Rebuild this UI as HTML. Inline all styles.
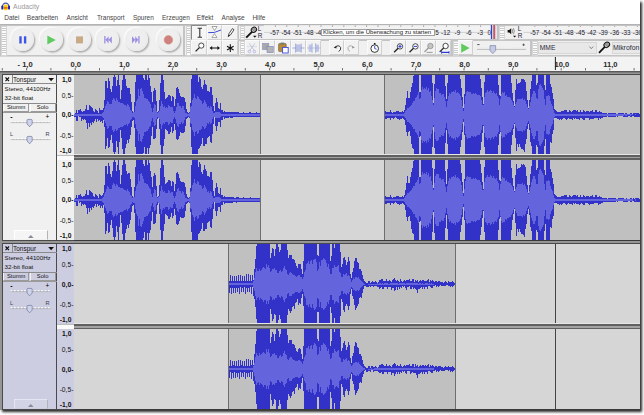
<!DOCTYPE html><html lang="de"><head><meta charset="utf-8"><title>Audacity</title><style>
html,body{margin:0;padding:0;background:#fff;}
body{width:644px;height:415px;overflow:hidden;position:relative;font-family:"Liberation Sans",sans-serif;color:#222;}
#win{position:absolute;left:0;top:0;width:640px;height:410px;background:#fff;box-shadow:1.5px 2px 2.5px rgba(0,0,0,.85);overflow:hidden;}
.abs{position:absolute;}
.t{position:absolute;white-space:nowrap;line-height:1;}
#title{left:13.1px;top:3.5px;font-size:6.8px;color:#9a9a9a;}
.menu{top:15.4px;font-size:6.5px;color:#444;}
#dock{left:0;top:24px;width:640px;height:32px;background:#f0f0f0;border-top:1px solid #b4b4b4;box-sizing:border-box;}
.tb{position:absolute;box-sizing:border-box;border:0.6px solid #c4c4c4;background:#f0f0f0;}
.grab{position:absolute;width:3.4px;background:repeating-linear-gradient(to bottom,#fcfcfc 0,#fcfcfc 1.2px,#cacaca 1.2px,#cacaca 2.2px);border:0.5px solid #d6d6d6;}
.rb{position:absolute;width:23px;height:23px;border-radius:50%;background:radial-gradient(circle at 45% 42%,#f1f1f1 0%,#ededed 60%,#e2e2e2 88%,#ececec 100%);box-shadow:1.2px 1.4px 1.8px rgba(0,0,0,.30),-1px -1px 1.5px rgba(255,255,255,.95);}
.sb{position:absolute;box-sizing:border-box;background:#f2f2f2;border:0.6px solid #d0d0d0;border-top-color:#fafafa;border-left-color:#fafafa;}
.sb.down{background:#f6f6f6;border-color:#8a8a8a #e8e8e8 #e8e8e8 #8a8a8a;}
#ruler{left:0;top:56px;width:640px;height:17px;background:linear-gradient(to bottom,#f3f3f3 0,#f3f3f3 13.8px,#5a5a5a 14.1px,#5a5a5a 15px,#7c7c7c 15.2px,#7c7c7c 16px);border-top:1px solid #d8d8d8;box-sizing:border-box;}
.rl{top:60.9px;font-size:7.6px;font-weight:bold;color:#2a2a2a;transform:translateX(-50%);}
#tracks{left:0;top:73px;width:640px;height:337px;background:#969696;}
.panel{position:absolute;left:2px;width:54px;box-sizing:border-box;border:1px solid #4a4a4a;border-right:none;}
.vr{position:absolute;left:56px;width:18.2px;box-sizing:border-box;border-left:1px solid #4a4a4a;}
.vl{position:absolute;left:56px;width:17.4px;text-align:right;font-size:6.7px;color:#111;line-height:1;white-space:nowrap;}
.pt{position:absolute;white-space:nowrap;line-height:1;font-size:6.15px;color:#111;}
.btn{position:absolute;box-sizing:border-box;border:0.6px solid #9a9a9a;border-top-color:rgba(255,255,255,.75);border-left-color:rgba(255,255,255,.75);color:#111;text-align:center;font-size:5.8px;line-height:7.4px;}
</style></head><body><div id="win"><svg class="abs" style="left:1px;top:1.9px" width="9.4" height="9" viewBox="0 0 10 9.6">
<rect x="2.9" y="2.6" width="4.2" height="6.3" rx="1.2" fill="#f8d010"/><rect x="2.9" y="5.6" width="4.2" height="1.4" fill="#ee4a10"/>
<path d="M1.5 5.2 A3.5 4 0 0 1 8.5 5.2" fill="none" stroke="#4452bc" stroke-width="1.25"/>
<rect x="0.3" y="3.7" width="2.2" height="4.4" rx="1" fill="#1c2aa8"/><rect x="7.5" y="3.7" width="2.2" height="4.4" rx="1" fill="#1c2aa8"/>
</svg><div class="t" id="title">Audacity</div><div class="t menu" style="left:4.2px">Datei</div><div class="t menu" style="left:26.8px">Bearbeiten</div><div class="t menu" style="left:66.6px">Ansicht</div><div class="t menu" style="left:96.9px">Transport</div><div class="t menu" style="left:132.9px">Spuren</div><div class="t menu" style="left:162.0px">Erzeugen</div><div class="t menu" style="left:196.8px">Effekt</div><div class="t menu" style="left:221.6px">Analyse</div><div class="t menu" style="left:252.4px">Hilfe</div><div class="abs" id="dock"></div><div class="tb" style="left:0;top:24.6px;width:184px;height:31px"></div><div class="grab" style="left:1.2px;top:26px;height:28px"></div><div class="rb" style="left:11.2px;top:28.4px"></div><div class="rb" style="left:39.5px;top:28.4px"></div><div class="rb" style="left:67.9px;top:28.4px"></div><div class="rb" style="left:96.3px;top:28.4px"></div><div class="rb" style="left:124.5px;top:28.4px"></div><div class="rb" style="left:156.9px;top:28.4px"></div><svg class="abs" style="left:0;top:24px" width="200" height="32" viewBox="0 0 200 32"><rect x="19.3" y="12.3" width="2.4" height="7.2" fill="#3f55e6"/><rect x="23.9" y="12.3" width="2.4" height="7.2" fill="#3f55e6"/><path d="M47.3 11.4 L55.8 15.9 L47.3 20.5Z" fill="#5fcb5f"/><rect x="76" y="12.4" width="7" height="7" fill="#c9aa86"/><path d="M104.2 12 h1.3 v7.6 h-1.3z M105.5 15.8 L108.6 12.2 V19.4Z M108.6 15.8 L111.8 12.2 V19.4Z" fill="#9a8fe2"/><path d="M139.6 12 h-1.3 v7.6 h1.3z M138.3 15.8 L135.2 12.2 V19.4Z M135.2 15.8 L132 12.2 V19.4Z" fill="#9a8fe2"/><circle cx="168.4" cy="15.9" r="4.3" fill="#d17f80" stroke="#c59a6a" stroke-width=".5"/></svg><div class="tb" style="left:184.3px;top:24.6px;width:54px;height:31px"></div><div class="grab" style="left:186px;top:26px;height:28px"></div><div class="sb down" style="left:191.0px;top:24.8px;width:15.6px;height:15.0px"></div><div class="sb" style="left:206.6px;top:24.8px;width:15.7px;height:15.0px"></div><div class="sb" style="left:222.3px;top:24.8px;width:15.7px;height:15.0px"></div><div class="sb" style="left:191.0px;top:39.8px;width:15.6px;height:15.2px"></div><div class="sb" style="left:206.6px;top:39.8px;width:15.7px;height:15.2px"></div><div class="sb" style="left:222.3px;top:39.8px;width:15.7px;height:15.2px"></div><svg class="abs" style="left:184px;top:24px" width="56" height="32" viewBox="0 0 56 32"><path d="M13.6 4.2 h4.4 M13.6 13.2 h4.4 M15.8 4.2 V13.2" stroke="#333" stroke-width="1.1" fill="none"/><path d="M28 2.5 h5 l-2.5 4z M28 13.6 h5 l-2.5 -4z" fill="#fff" stroke="#555" stroke-width=".5"/><path d="M24.2 8.6 Q30 9.6 37 6" stroke="#3a4ad8" stroke-width="1" fill="none"/><path d="M44.2 12.6 L45 9.6 L48.4 4.6 L50 5.7 L46.6 10.8Z" fill="#fff" stroke="#222" stroke-width=".8"/><path d="M44.2 12.6 L45 10.6 l1 .7z" fill="#222"/><circle cx="17.3" cy="21.6" r="2.6" fill="#fff" stroke="#222" stroke-width=".8"/><path d="M15.4 23.6 L11.6 27.4" stroke="#222" stroke-width="1.3"/><path d="M26.6 24 h8.4" stroke="#111" stroke-width="1"/><path d="M25.6 24 l2.6 -2 v4z M36 24 l-2.6 -2 v4z" fill="#111"/><path d="M46.3 20.2 V28 M43 22.2 L49.6 26 M49.6 22.2 L43 26" stroke="#111" stroke-width="1.1"/></svg><div class="tb" style="left:238.0px;top:24.6px;width:259.5px;height:15px"></div><div class="grab" style="left:239.7px;top:26px;height:12px"></div><svg class="abs" style="left:244px;top:24px" width="22" height="16" viewBox="0 0 22 16"><ellipse cx="9.9" cy="5.8" rx="2.8" ry="2.4" transform="rotate(-40 9.9 5.8)" fill="#bbb" stroke="#111" stroke-width="1"/><path d="M8 7.8 L2.2 13.6" stroke="#111" stroke-width="1.9"/><path d="M8.2 5 l2.6 2.4 M9.4 3.9 l2.4 2.2" stroke="#222" stroke-width=".5"/><path d="M9 11.8 h3.6 l-1.8 1.9z" fill="#111"/></svg><div class="t" style="left:257.8px;top:26.2px;font-size:6.4px;color:#223">L</div><div class="t" style="left:257.8px;top:32.8px;font-size:6.4px;color:#223">R</div><svg class="abs" style="left:0;top:24px" width="640" height="16" viewBox="0 0 640 16"><rect x="264" y="1.2" width="226" height="13.6" fill="#f2f2f2"/><path d="M264 8.4 H490" stroke="#c8c8c8" stroke-width=".8"/><path d="M275.4 1.6v1M286.8 1.6v1M298.2 1.6v1M309.6 1.6v1M321.0 1.6v1M332.4 1.6v1M343.8 1.6v1M355.2 1.6v1M366.6 1.6v1M378.0 1.6v1M389.4 1.6v1M400.8 1.6v1M412.2 1.6v1M423.6 1.6v1M435.0 1.6v1M446.4 1.6v1M457.8 1.6v1M469.2 1.6v1M480.6 1.6v1" stroke="#444" stroke-width=".7"/><rect x="523.5" y="1.2" width="116" height="13.6" fill="#f2f2f2"/><path d="M523.5 8.4 H640" stroke="#c8c8c8" stroke-width=".8"/><path d="M534.8 1.6v1M546.2 1.6v1M557.6 1.6v1M569.0 1.6v1M580.4 1.6v1M591.8 1.6v1M603.2 1.6v1M614.6 1.6v1M626.0 1.6v1M637.4 1.6v1" stroke="#444" stroke-width=".7"/><rect x="490.3" y="1" width="6" height="14" fill="#bcd4ee"/><rect x="491" y="1" width="1" height="14" fill="#2a40d0"/><rect x="493.3" y="1" width="1.7" height="14" fill="#e84a4a"/></svg><div class="t" style="left:275.4px;top:29.6px;font-size:6.3px;color:#223;transform:translateX(-58%)">-57</div><div class="t" style="left:286.8px;top:29.6px;font-size:6.3px;color:#223;transform:translateX(-58%)">-54</div><div class="t" style="left:298.2px;top:29.6px;font-size:6.3px;color:#223;transform:translateX(-58%)">-51</div><div class="t" style="left:309.6px;top:29.6px;font-size:6.3px;color:#223;transform:translateX(-58%)">-48</div><div class="t" style="left:321.0px;top:29.6px;font-size:6.3px;color:#223;transform:translateX(-58%)">-45</div><div class="t" style="left:332.4px;top:29.6px;font-size:6.3px;color:#223;transform:translateX(-58%)">-42</div><div class="t" style="left:343.8px;top:29.6px;font-size:6.3px;color:#223;transform:translateX(-58%)">-39</div><div class="t" style="left:355.2px;top:29.6px;font-size:6.3px;color:#223;transform:translateX(-58%)">-36</div><div class="t" style="left:366.6px;top:29.6px;font-size:6.3px;color:#223;transform:translateX(-58%)">-33</div><div class="t" style="left:378.0px;top:29.6px;font-size:6.3px;color:#223;transform:translateX(-58%)">-30</div><div class="t" style="left:389.4px;top:29.6px;font-size:6.3px;color:#223;transform:translateX(-58%)">-27</div><div class="t" style="left:400.8px;top:29.6px;font-size:6.3px;color:#223;transform:translateX(-58%)">-24</div><div class="t" style="left:412.2px;top:29.6px;font-size:6.3px;color:#223;transform:translateX(-58%)">-21</div><div class="t" style="left:423.6px;top:29.6px;font-size:6.3px;color:#223;transform:translateX(-58%)">-18</div><div class="t" style="left:435.0px;top:29.6px;font-size:6.3px;color:#223;transform:translateX(-58%)">-15</div><div class="t" style="left:446.4px;top:29.6px;font-size:6.3px;color:#223;transform:translateX(-58%)">-12</div><div class="t" style="left:457.8px;top:29.6px;font-size:6.3px;color:#223;transform:translateX(-58%)">-9</div><div class="t" style="left:469.2px;top:29.6px;font-size:6.3px;color:#223;transform:translateX(-58%)">-6</div><div class="t" style="left:480.6px;top:29.6px;font-size:6.3px;color:#223;transform:translateX(-58%)">-3</div><div class="t" style="left:489.3px;top:29.6px;font-size:6.3px;color:#223;transform:translateX(-50%)">0</div><div class="t" style="left:534.8px;top:29.6px;font-size:6.3px;color:#223;transform:translateX(-50%)">-57</div><div class="t" style="left:546.2px;top:29.6px;font-size:6.3px;color:#223;transform:translateX(-50%)">-54</div><div class="t" style="left:557.6px;top:29.6px;font-size:6.3px;color:#223;transform:translateX(-50%)">-51</div><div class="t" style="left:569.0px;top:29.6px;font-size:6.3px;color:#223;transform:translateX(-50%)">-48</div><div class="t" style="left:580.4px;top:29.6px;font-size:6.3px;color:#223;transform:translateX(-50%)">-45</div><div class="t" style="left:591.8px;top:29.6px;font-size:6.3px;color:#223;transform:translateX(-50%)">-42</div><div class="t" style="left:603.2px;top:29.6px;font-size:6.3px;color:#223;transform:translateX(-50%)">-39</div><div class="t" style="left:614.6px;top:29.6px;font-size:6.3px;color:#223;transform:translateX(-50%)">-36</div><div class="t" style="left:626.0px;top:29.6px;font-size:6.3px;color:#223;transform:translateX(-50%)">-33</div><div class="t" style="left:637.4px;top:29.6px;font-size:6.3px;color:#223;transform:translateX(-50%)">-30</div><div class="abs" style="left:321px;top:28.6px;width:113.5px;height:7.4px;background:#fff;border:0.6px solid #a0a0a0;box-sizing:border-box"></div><div class="t" style="left:323px;top:29.3px;font-size:6.05px;color:#222">Klicken, um die Überwachung zu starten</div><div class="tb" style="left:497.5px;top:24.6px;width:143px;height:15px;background:none"></div><div class="grab" style="left:499.3px;top:26px;height:12px"></div><svg class="abs" style="left:505px;top:24px" width="14" height="16" viewBox="0 0 14 16"><path d="M2.6 6 h1.6 l2 -1.8 v6 l-2 -1.8 h-1.6z" fill="#111"/><path d="M7.2 5.2 q1 2 0 4 M8.4 4.2 q1.8 3 0 6" stroke="#444" stroke-width=".55" fill="none"/><path d="M8 11.8 h3.2 l-1.6 1.8z" fill="#111"/></svg><div class="t" style="left:517.8px;top:26.2px;font-size:6.4px;color:#223">L</div><div class="t" style="left:517.8px;top:32.8px;font-size:6.4px;color:#223">R</div><div class="tb" style="left:238px;top:39.8px;width:213.5px;height:15.8px"></div><div class="grab" style="left:239.7px;top:41.2px;height:13px"></div><div class="sb" style="left:244.8px;top:40.3px;width:15.2px;height:14.8px"></div><div class="sb" style="left:260.0px;top:40.3px;width:15.2px;height:14.8px"></div><div class="sb" style="left:275.2px;top:40.3px;width:15.4px;height:14.8px"></div><div class="sb" style="left:290.6px;top:40.3px;width:15.4px;height:14.8px"></div><div class="sb" style="left:306.0px;top:40.3px;width:15.3px;height:14.8px"></div><div class="sb" style="left:329.3px;top:40.3px;width:15.0px;height:14.8px"></div><div class="sb" style="left:344.3px;top:40.3px;width:15.0px;height:14.8px"></div><div class="sb" style="left:367.0px;top:40.3px;width:15.4px;height:14.8px"></div><div class="sb" style="left:390.4px;top:40.3px;width:15.2px;height:14.8px"></div><div class="sb" style="left:405.6px;top:40.3px;width:15.0px;height:14.8px"></div><div class="sb" style="left:420.6px;top:40.3px;width:15.2px;height:14.8px"></div><div class="sb" style="left:435.8px;top:40.3px;width:15.2px;height:14.8px"></div><svg class="abs" style="left:238px;top:40px" width="214" height="16" viewBox="0 0 214 16"><path d="M11.4 3.4 L16.4 10.6 M16.8 3.4 L11.8 10.6" stroke="#b6bad6" stroke-width=".8"/><path d="M9 6.6 h10" stroke="#c4c8dc" stroke-width=".5"/><circle cx="11.4" cy="11.4" r="1.3" fill="none" stroke="#a8a8dc" stroke-width=".7"/><circle cx="16.4" cy="11.6" r="1.3" fill="none" stroke="#a8a8dc" stroke-width=".7"/><rect x="24.6" y="3.4" width="6.2" height="6.2" fill="#a8a8a8" stroke="#8890b8" stroke-width=".6"/><rect x="29" y="6.4" width="6.2" height="6.2" fill="#b4b4b4" stroke="#7880c0" stroke-width=".6"/><rect x="40.6" y="3.6" width="7.6" height="8" rx=".8" fill="#b58a3c" stroke="#6a5a3a" stroke-width=".6"/><rect x="42.6" y="2.6" width="3.6" height="1.8" fill="#777"/><rect x="44.6" y="7.4" width="5.6" height="5.6" fill="#fff" stroke="#3a48e0" stroke-width=".9"/><path d="M54.4 8 h12" stroke="#8ea0d8" stroke-width=".8"/><rect x="58" y="4.4" width="4.8" height="7.4" fill="#bcc2e6"/><path d="M57.6 3.6v9M63.2 3.6v9" stroke="#8490d0" stroke-width=".7"/><rect x="70.6" y="4.6" width="3" height="7.2" fill="#c0c6e6"/><rect x="78" y="4.6" width="3" height="7.2" fill="#c0c6e6"/><path d="M74 3.4v9.4M77.6 3.4v9.4" stroke="#8898d0" stroke-width=".7"/><path d="M69 8 h14" stroke="#9aa8dc" stroke-width=".6"/><path d="M97.4 7.2 Q100.6 4.2 102.6 7.4 Q103.4 10.2 100.6 11.4" fill="none" stroke="#222" stroke-width=".9"/><path d="M95.6 7.4 l3 -1.6 l-.2 2.8z" fill="#222"/><path d="M115.2 7.2 Q112 4.2 110 7.4 Q109.2 10.2 112 11.4" fill="none" stroke="#9a9a9a" stroke-width=".8"/><path d="M117 7.4 l-3 -1.6 l.2 2.8z" fill="#9a9a9a"/><circle cx="136.7" cy="8.6" r="3.8" fill="#fff" stroke="#222" stroke-width=".9"/><rect x="135.9" y="3" width="1.6" height="1.6" fill="#222"/><path d="M136.7 8.6 V6 M136.7 8.6 L138.6 9.2" stroke="#3040d0" stroke-width=".9"/><circle cx="162.0" cy="6.4" r="2.7" fill="#fff" stroke="#222" stroke-width=".8"/><path d="M160.1 8.3 l-4 4" stroke="#222" stroke-width="1.3"/><path d="M160.4 6.4h3.2M162 4.8v3.2" stroke="#2838d8" stroke-width="1"/><circle cx="177.4" cy="6.4" r="2.7" fill="#fff" stroke="#222" stroke-width=".8"/><path d="M175.5 8.3 l-4 4" stroke="#222" stroke-width="1.3"/><path d="M175.8 6.4h3.2" stroke="#2838d8" stroke-width="1"/><circle cx="192.4" cy="6.0" r="2.7" fill="#c4c4c4" stroke="#909090" stroke-width=".8"/><path d="M190.5 7.9 l-4 4" stroke="#909090" stroke-width="1.3"/><path d="M188.6 12.4h6" stroke="#909090" stroke-width=".9"/><circle cx="207.6" cy="6.0" r="2.7" fill="#fff" stroke="#222" stroke-width=".8"/><path d="M205.7 7.9 l-4 4" stroke="#222" stroke-width="1.3"/><path d="M203.6 12.4h7.4" stroke="#2838d8" stroke-width="1.2"/><path d="M203.6 11v2.8M211 11v2.8" stroke="#2838d8" stroke-width=".8"/></svg><div class="tb" style="left:451.5px;top:39.8px;width:79px;height:15.8px"></div><div class="grab" style="left:453.2px;top:41.2px;height:13px"></div><div class="sb" style="left:457.8px;top:40.3px;width:15px;height:14.8px"></div><svg class="abs" style="left:452px;top:40px" width="80" height="16" viewBox="0 0 80 16"><path d="M9.2 3.4 L17.6 8 L9.2 12.8Z" fill="#5fcb5f"/><path d="M25 9.4 H74" stroke="#b0b0b0" stroke-width=".8"/><path d="M25 9.4 H74" stroke="#e8e8e8" stroke-width="1.6" stroke-dasharray="1.6 1.6" transform="translate(0,-1.2)"/><path d="M25.2 4.6h2.4" stroke="#333" stroke-width=".8"/><path d="M70.4 4.8h2.4M71.6 3.6v2.4" stroke="#333" stroke-width=".7"/><path d="M38 5.6 h5.6 v5 l-2.8 3 l-2.8 -3z" fill="#c6cce4" stroke="#7a82a8" stroke-width=".7"/></svg><div class="tb" style="left:530.5px;top:39.8px;width:111px;height:15.8px"></div><div class="grab" style="left:532.2px;top:41.2px;height:13px"></div><div class="abs" style="left:537.6px;top:41.6px;width:59.6px;height:12.6px;background:#e8e8e8;border:0.6px solid #d6d6d6;box-sizing:border-box"></div><div class="t" style="left:539.8px;top:45.2px;font-size:6.7px;color:#2a2a3a">MME</div><svg class="abs" style="left:586px;top:40px" width="54" height="16" viewBox="0 0 54 16"><path d="M3.4 6.6 l1.9 2 l1.9 -2" fill="none" stroke="#555" stroke-width=".7"/><ellipse cx="20.8" cy="4.8" rx="3" ry="2.5" transform="rotate(-40 20.8 4.8)" fill="#bbb" stroke="#111" stroke-width="1"/><path d="M18.8 6.8 L13 12.8" stroke="#111" stroke-width="1.8"/><path d="M19.2 4 l2.6 2.4 M20.4 3 l2.4 2.2" stroke="#222" stroke-width=".5"/></svg><div class="abs" style="left:611.6px;top:41.6px;width:30px;height:12.6px;background:#e8e8e8;border:0.6px solid #d6d6d6;box-sizing:border-box"></div><div class="t" style="left:612.9px;top:45.2px;font-size:6.9px;color:#2a2a3a">Mikrofon</div><div class="abs" id="ruler"></div><svg class="abs" style="left:0;top:56px" width="640" height="15" viewBox="0 0 640 15"><path d="M2.3 12.2v2.2M26.6 12.2v2.2M50.9 12.2v2.2M75.2 12.2v2.2M99.5 12.2v2.2M123.8 12.2v2.2M148.1 12.2v2.2M172.4 12.2v2.2M196.7 12.2v2.2M221.0 12.2v2.2M245.3 12.2v2.2M269.6 12.2v2.2M293.9 12.2v2.2M318.2 12.2v2.2M342.5 12.2v2.2M366.8 12.2v2.2M391.1 12.2v2.2M415.4 12.2v2.2M439.7 12.2v2.2M464.0 12.2v2.2M488.3 12.2v2.2M512.6 12.2v2.2M536.9 12.2v2.2M561.2 12.2v2.2M585.5 12.2v2.2M609.8 12.2v2.2M634.1 12.2v2.2" stroke="#555" stroke-width=".9"/><path d="M555.4 1 V14" stroke="#222" stroke-width="1"/></svg><div class="t rl" style="left:25.1px">- 1,0</div><div class="t rl" style="left:75.8px">0,0</div><div class="t rl" style="left:124.4px">1,0</div><div class="t rl" style="left:173.0px">2,0</div><div class="t rl" style="left:221.6px">3,0</div><div class="t rl" style="left:270.2px">4,0</div><div class="t rl" style="left:318.8px">5,0</div><div class="t rl" style="left:367.4px">6,0</div><div class="t rl" style="left:416.0px">7,0</div><div class="t rl" style="left:464.6px">8,0</div><div class="t rl" style="left:513.2px">9,0</div><div class="t rl" style="left:561.8px">10,0</div><div class="t rl" style="left:610.4px">11,0</div><div class="abs" id="tracks"></div><div class="panel" style="top:74.0px;height:167.0px;background:#f0f0f0"></div><div class="vr" style="top:74.0px;height:167.0px;background:#f0f0f0;border-top:1px solid #4a4a4a;border-bottom:1px solid #4a4a4a"></div><div class="abs" style="left:3px;top:83.0px;width:53.5px;height:0.7px;background:#8a8a8a"></div><div class="abs" style="left:11.6px;top:75.0px;width:0.7px;height:8px;background:#8a8a8a"></div><svg class="abs" style="left:3px;top:75.0px" width="54" height="9" viewBox="0 0 54 9"><path d="M2.5 2.5 l3.5 3.7 M6 2.5 l-3.5 3.7" stroke="#111" stroke-width="1.15"/><path d="M45.2 3 h5.8 l-2.9 3.2z" fill="#111"/></svg><div class="pt" style="left:13px;top:76.5px;font-size:6.5px">Tonspur</div><div class="pt" style="left:4.6px;top:86.0px">Stereo, 44100Hz</div><div class="pt" style="left:4.6px;top:95.0px">32-bit float</div><div class="btn" style="left:3.2px;top:103.2px;width:26px;height:8.4px;background:#f0f0f0">Stumm</div><div class="btn" style="left:29.6px;top:103.2px;width:26px;height:8.4px;background:#f0f0f0">Solo</div><div class="abs" style="left:3px;top:102.6px;width:53.5px;height:0.7px;background:#8a8a8a"></div><div class="abs" style="left:3px;top:112.0px;width:53.5px;height:0.7px;background:#9a9a9a"></div><svg class="abs" style="left:3px;top:114.2px" width="54" height="16" viewBox="0 0 54 16"><path d="M7.6 8.6 H47.4" stroke="#a8a8a8" stroke-width=".8"/><path d="M7.6 7.6 H47.4" stroke="#fafafa" stroke-width="1.2" stroke-dasharray="1.7 1.7"/><path d="M24 6.4 q0 -1 1 -1 h3.2 q1 0 1 1 v3.6 l-2.6 2.8 l-2.6 -2.8z" fill="#cfd4ea" stroke="#70789c" stroke-width=".7"/></svg><div class="pt" style="left:10.2px;top:113.2px;font-size:7px;font-weight:bold;color:#000">-</div><div class="pt" style="left:45.4px;top:113.5px;font-size:6.4px;color:#000">+</div><svg class="abs" style="left:3px;top:131.4px" width="54" height="16" viewBox="0 0 54 16"><path d="M7.6 8.6 H47.4" stroke="#a8a8a8" stroke-width=".8"/><path d="M7.6 7.6 H47.4" stroke="#fafafa" stroke-width="1.2" stroke-dasharray="1.7 1.7"/><path d="M24 6.4 q0 -1 1 -1 h3.2 q1 0 1 1 v3.6 l-2.6 2.8 l-2.6 -2.8z" fill="#cfd4ea" stroke="#70789c" stroke-width=".7"/></svg><div class="pt" style="left:10px;top:131.9px;font-size:5.6px;color:#445">L</div><div class="pt" style="left:45.6px;top:131.9px;font-size:5.6px;color:#445">R</div><div class="btn" style="left:13.5px;top:230.4px;width:34px;height:9.6px;background:#f5f5f5;border-color:#fff #b4b4b4 #f0f0f0 #fff"></div><svg class="abs" style="left:27px;top:234.0px" width="8" height="5" viewBox="0 0 8 5"><path d="M1 4 h5.6 l-2.8 -3z" fill="#8a8a9a"/></svg><div class="vl" style="top:76.6px;font-weight:bold;width:15.4px">1,0</div><div class="vl" style="top:93.0px">0,5-</div><div class="vl" style="top:112.4px;font-weight:bold">0,0-</div><div class="vl" style="top:132.8px">-0,5-</div><div class="vl" style="top:147.7px;font-weight:bold;width:15.4px">-1,0</div><div class="vl" style="top:161.7px;font-weight:bold;width:15.4px">1,0</div><div class="vl" style="top:178.0px">0,5-</div><div class="vl" style="top:197.4px;font-weight:bold">0,0-</div><div class="vl" style="top:217.8px">-0,5-</div><div class="vl" style="top:232.7px;font-weight:bold;width:15.4px">-1,0</div><div class="abs" style="left:57px;top:154.7px;width:17.2px;height:5.2px;background:#fbfbfb;border-top:0.6px solid #bdbdbd;box-sizing:border-box"></div><div class="panel" style="top:243.0px;height:167.0px;background:#cdcde2"></div><div class="vr" style="top:243.0px;height:167.0px;background:#cdcde2;border-top:1px solid #4a4a4a;border-bottom:1px solid #4a4a4a"></div><div class="abs" style="left:3px;top:252.0px;width:53.5px;height:0.7px;background:#8a8a8a"></div><div class="abs" style="left:11.6px;top:244.0px;width:0.7px;height:8px;background:#8a8a8a"></div><svg class="abs" style="left:3px;top:244.0px" width="54" height="9" viewBox="0 0 54 9"><path d="M2.5 2.5 l3.5 3.7 M6 2.5 l-3.5 3.7" stroke="#111" stroke-width="1.15"/><path d="M45.2 3 h5.8 l-2.9 3.2z" fill="#111"/></svg><div class="pt" style="left:13px;top:245.5px;font-size:6.5px">Tonspur</div><div class="pt" style="left:4.6px;top:255.0px">Stereo, 44100Hz</div><div class="pt" style="left:4.6px;top:264.0px">32-bit float</div><div class="btn" style="left:3.2px;top:272.2px;width:26px;height:8.4px;background:#cdcde2">Stumm</div><div class="btn" style="left:29.6px;top:272.2px;width:26px;height:8.4px;background:#cdcde2">Solo</div><div class="abs" style="left:3px;top:271.6px;width:53.5px;height:0.7px;background:#8a8a8a"></div><div class="abs" style="left:3px;top:281.0px;width:53.5px;height:0.7px;background:#9a9a9a"></div><svg class="abs" style="left:3px;top:283.2px" width="54" height="16" viewBox="0 0 54 16"><path d="M7.6 8.6 H47.4" stroke="#a8a8a8" stroke-width=".8"/><path d="M7.6 7.6 H47.4" stroke="#fafafa" stroke-width="1.2" stroke-dasharray="1.7 1.7"/><path d="M24 6.4 q0 -1 1 -1 h3.2 q1 0 1 1 v3.6 l-2.6 2.8 l-2.6 -2.8z" fill="#cfd4ea" stroke="#70789c" stroke-width=".7"/></svg><div class="pt" style="left:10.2px;top:282.2px;font-size:7px;font-weight:bold;color:#000">-</div><div class="pt" style="left:45.4px;top:282.5px;font-size:6.4px;color:#000">+</div><svg class="abs" style="left:3px;top:300.4px" width="54" height="16" viewBox="0 0 54 16"><path d="M7.6 8.6 H47.4" stroke="#a8a8a8" stroke-width=".8"/><path d="M7.6 7.6 H47.4" stroke="#fafafa" stroke-width="1.2" stroke-dasharray="1.7 1.7"/><path d="M24 6.4 q0 -1 1 -1 h3.2 q1 0 1 1 v3.6 l-2.6 2.8 l-2.6 -2.8z" fill="#cfd4ea" stroke="#70789c" stroke-width=".7"/></svg><div class="pt" style="left:10px;top:300.9px;font-size:5.6px;color:#445">L</div><div class="pt" style="left:45.6px;top:300.9px;font-size:5.6px;color:#445">R</div><div class="btn" style="left:13.5px;top:399.4px;width:34px;height:9.6px;background:#d3d3e6;border-color:#e6e6f2 #b4b4b4 #cdcde2 #e6e6f2"></div><svg class="abs" style="left:27px;top:403.0px" width="8" height="5" viewBox="0 0 8 5"><path d="M1 4 h5.6 l-2.8 -3z" fill="#8a8a9a"/></svg><div class="vl" style="top:245.9px;font-weight:bold;width:15.4px">1,0</div><div class="vl" style="top:262.2px">0,5-</div><div class="vl" style="top:281.6px;font-weight:bold">0,0-</div><div class="vl" style="top:301.9px">-0,5-</div><div class="vl" style="top:316.8px;font-weight:bold;width:15.4px">-1,0</div><div class="vl" style="top:330.6px;font-weight:bold;width:15.4px">1,0</div><div class="vl" style="top:347.0px">0,5-</div><div class="vl" style="top:366.5px;font-weight:bold">0,0-</div><div class="vl" style="top:386.9px">-0,5-</div><div class="vl" style="top:401.9px;font-weight:bold;width:15.4px">-1,0</div><div class="abs" style="left:57px;top:323.8px;width:17.2px;height:5.0px;background:#fbfbfb;border-top:0.6px solid #bdbdbd;box-sizing:border-box"></div><svg class="abs" style="left:0;top:71px" width="640" height="340" viewBox="0 71 640 340" shape-rendering="crispEdges"><rect x="74" y="74.8" width="566" height="80.2" fill="#d6d6d6"/><rect x="74.0" y="74.8" width="187.0" height="80.2" fill="#c0c0c0"/><rect x="384.5" y="74.8" width="255.5" height="80.2" fill="#c0c0c0"/><rect x="74" y="159.9" width="566" height="80.1" fill="#d6d6d6"/><rect x="74.0" y="159.9" width="187.0" height="80.1" fill="#c0c0c0"/><rect x="384.5" y="159.9" width="255.5" height="80.1" fill="#c0c0c0"/><rect x="74" y="244.1" width="566" height="80.0" fill="#d6d6d6"/><rect x="228.5" y="244.1" width="227.0" height="80.0" fill="#c0c0c0"/><rect x="74" y="328.8" width="566" height="80.4" fill="#d6d6d6"/><rect x="228.5" y="328.8" width="227.0" height="80.4" fill="#c0c0c0"/><path d="M74.5 113.9V117.1M75.5 113.1V117.3M76.5 109.8V120.7M77.5 113.0V121.1M78.5 110.4V116.3M79.5 110.2V117.4M80.5 109.1V116.6M81.5 110.5V121.3M82.5 111.7V119.4M83.5 111.1V120.2M84.5 110.6V119.2M85.5 108.5V119.8M86.5 104.8V122.5M87.5 109.8V128.8M88.5 109.8V122.7M89.5 104.7V127.4M90.5 105.7V122.8M91.5 107.3V125.0M92.5 108.2V122.2M93.5 110.7V123.3M94.5 111.6V120.8M95.5 108.6V119.3M96.5 109.7V121.8M97.5 111.1V119.2M98.5 112.6V121.4M99.5 108.4V120.0M100.5 110.1V122.4M101.5 110.4V121.0M102.5 109.5V123.1M103.5 107.9V120.1M104.5 100.1V127.4M105.5 80.9V148.7M106.5 81.4V146.3M107.5 88.4V138.4M108.5 78.2V147.9M109.5 80.5V146.9M110.5 89.0V140.1M111.5 92.3V134.8M112.5 86.1V143.4M113.5 76.8V152.3M114.5 74.7V155.1M115.5 76.6V151.6M116.5 85.7V141.3M117.5 79.5V147.0M118.5 74.7V155.1M119.5 85.3V142.4M120.5 99.1V129.8M121.5 90.3V137.8M122.5 79.7V149.0M123.5 74.7V155.1M124.5 74.7V155.1M125.5 78.9V148.3M126.5 86.2V143.5M127.5 88.4V139.5M128.5 87.6V142.6M129.5 88.3V139.0M130.5 93.7V134.8M131.5 102.1V126.8M132.5 110.5V120.6M133.5 111.7V120.1M134.5 102.2V128.0M135.5 81.6V146.9M136.5 74.7V155.1M137.5 74.7V155.1M138.5 74.7V155.1M139.5 74.7V155.1M140.5 74.7V155.1M141.5 74.7V155.1M142.5 74.7V155.1M143.5 78.4V152.8M144.5 80.4V147.4M145.5 74.7V155.1M146.5 74.7V155.1M147.5 79.5V147.9M148.5 74.7V155.1M149.5 78.1V148.4M150.5 85.6V145.0M151.5 92.1V136.3M152.5 102.4V127.0M153.5 91.2V138.6M154.5 88.0V139.1M155.5 90.4V137.9M156.5 100.9V129.0M157.5 112.3V119.4M158.5 111.4V118.1M159.5 100.0V128.8M160.5 83.3V144.8M161.5 74.7V155.1M162.5 74.7V155.1M163.5 80.0V145.9M164.5 92.0V138.8M165.5 99.2V129.1M166.5 98.2V130.2M167.5 97.0V131.1M168.5 94.5V134.0M169.5 94.6V133.6M170.5 95.5V131.5M171.5 101.3V127.4M172.5 96.2V132.5M173.5 97.2V130.8M174.5 105.8V124.1M175.5 98.6V129.7M176.5 87.8V139.1M177.5 86.6V140.1M178.5 88.6V138.7M179.5 93.2V136.3M180.5 95.5V132.3M181.5 96.8V133.0M182.5 96.9V132.8M183.5 96.5V133.0M184.5 97.5V131.9M185.5 102.2V126.4M186.5 109.2V118.9M187.5 112.4V117.9M188.5 113.2V116.6M189.5 112.2V117.7M190.5 102.7V126.7M191.5 79.4V147.1M192.5 74.7V155.1M193.5 74.7V155.1M194.5 74.7V155.1M195.5 74.7V155.1M196.5 74.7V155.1M197.5 74.7V155.1M198.5 81.9V148.5M199.5 76.8V148.2M200.5 78.7V146.2M201.5 86.7V143.8M202.5 89.0V138.4M203.5 85.0V145.5M204.5 79.7V145.5M205.5 84.2V144.3M206.5 85.4V144.4M207.5 91.0V138.0M208.5 90.8V136.7M209.5 92.0V135.6M210.5 87.3V141.7M211.5 86.8V143.3M212.5 94.5V133.9M213.5 105.7V124.2M214.5 111.2V117.2M215.5 103.1V125.7M216.5 97.6V130.8M217.5 102.2V126.4M218.5 108.2V121.5M219.5 109.3V121.7M220.5 102.8V126.6M221.5 110.3V120.4M222.5 110.3V119.5M223.5 112.0V117.4M224.5 111.4V118.8M225.5 111.7V118.2M226.5 112.2V117.7M227.5 112.2V117.7M228.5 112.0V117.8M229.5 112.1V117.4M230.5 112.3V117.7M231.5 112.4V117.9M232.5 112.3V117.6M233.5 112.3V117.1M234.5 112.4V117.3M235.5 112.4V117.4M236.5 112.4V117.4M237.5 112.3V117.3M238.5 112.2V117.3M239.5 112.7V117.0M240.5 113.0V117.2M241.5 113.0V117.1M242.5 112.8V117.1M243.5 112.3V117.1M244.5 112.5V117.1M245.5 112.6V117.4M246.5 112.9V117.0M247.5 112.8V116.9M248.5 112.5V117.3M249.5 112.4V117.3M250.5 112.3V117.4M251.5 112.7V117.0M252.5 113.0V117.1M253.5 112.6V117.1M254.5 112.8V117.2M255.5 112.6V117.4M256.5 112.4V117.1M257.5 112.6V117.1M258.5 112.5V117.2M259.5 112.5V117.2M260.5 112.7V117.3" stroke="#3232c8" stroke-width="1" fill="none"/><path d="M74.5 114.3V115.5M75.5 114.3V115.5M76.5 114.3V115.5M77.5 114.2V115.6M78.5 114.2V115.6M79.5 114.1V115.7M80.5 114.3V115.5M81.5 114.2V115.6M82.5 114.3V115.5M83.5 114.1V115.7M84.5 114.2V115.6M85.5 114.3V115.5M86.5 114.1V115.7M87.5 114.0V115.8M88.5 114.0V115.8M89.5 114.1V115.7M90.5 114.1V115.7M91.5 114.0V115.8M92.5 114.2V115.6M93.5 114.1V115.7M94.5 114.0V115.8M95.5 114.0V115.8M96.5 114.0V115.8M97.5 114.1V115.7M98.5 113.8V116.0M99.5 114.1V115.7M100.5 113.9V115.9M101.5 114.0V115.8M102.5 113.1V116.7M103.5 111.5V118.3M104.5 109.3V120.5M105.5 106.4V123.4M106.5 104.2V125.6M107.5 101.3V128.5M108.5 101.5V128.3M109.5 103.7V126.1M110.5 104.2V125.6M111.5 104.1V125.7M112.5 99.7V130.1M113.5 97.9V131.9M114.5 99.3V130.5M115.5 101.2V128.6M116.5 98.4V131.4M117.5 99.9V129.9M118.5 102.1V127.7M119.5 102.3V127.5M120.5 102.7V127.1M121.5 103.0V126.8M122.5 102.5V127.3M123.5 103.8V126.0M124.5 104.6V125.2M125.5 104.5V125.3M126.5 105.5V124.3M127.5 103.9V125.9M128.5 105.4V124.4M129.5 106.6V123.2M130.5 110.2V119.6M131.5 111.3V118.5M132.5 113.3V116.5M133.5 112.4V117.4M134.5 112.1V117.7M135.5 106.0V123.8M136.5 101.3V128.5M137.5 99.2V130.6M138.5 88.7V141.1M139.5 95.5V134.3M140.5 89.2V140.6M141.5 88.0V141.8M142.5 91.2V138.6M143.5 94.3V135.5M144.5 98.0V131.8M145.5 98.2V131.6M146.5 99.1V130.7M147.5 99.1V130.7M148.5 101.3V128.5M149.5 102.4V127.4M150.5 103.7V126.1M151.5 108.4V121.4M152.5 112.1V117.7M153.5 107.6V122.2M154.5 103.7V126.1M155.5 105.1V124.7M156.5 111.0V118.8M157.5 113.1V116.7M158.5 112.2V117.6M159.5 110.8V119.0M160.5 105.8V124.0M161.5 101.0V128.8M162.5 104.4V125.4M163.5 106.6V123.2M164.5 106.1V123.7M165.5 108.1V121.7M166.5 107.4V122.4M167.5 107.5V122.3M168.5 105.0V124.8M169.5 106.3V123.5M170.5 107.4V122.4M171.5 107.2V122.6M172.5 107.2V122.6M173.5 110.7V119.1M174.5 113.2V116.6M175.5 111.1V118.7M176.5 107.1V122.7M177.5 103.4V126.4M178.5 102.9V126.9M179.5 105.9V123.9M180.5 105.7V124.1M181.5 108.0V121.8M182.5 105.5V124.3M183.5 106.4V123.4M184.5 109.8V120.0M185.5 112.6V117.2M186.5 113.0V116.8M187.5 113.7V116.1M188.5 114.2V115.6M189.5 112.7V117.1M190.5 107.2V122.6M191.5 105.6V124.2M192.5 99.9V129.9M193.5 97.5V132.3M194.5 94.3V135.5M195.5 97.9V131.9M196.5 98.5V131.3M197.5 95.6V134.2M198.5 97.3V132.5M199.5 99.4V130.4M200.5 100.2V129.6M201.5 101.0V128.8M202.5 104.3V125.5M203.5 102.8V127.0M204.5 100.4V129.4M205.5 102.2V127.6M206.5 104.0V125.8M207.5 107.3V122.5M208.5 106.1V123.7M209.5 107.7V122.1M210.5 106.3V123.5M211.5 107.0V122.8M212.5 110.7V119.1M213.5 112.5V117.3M214.5 113.1V116.7M215.5 111.5V118.3M216.5 111.5V118.3M217.5 112.3V117.5M218.5 112.0V117.8M219.5 112.2V117.6M220.5 112.9V116.9M221.5 113.5V116.3M222.5 114.0V115.8M223.5 114.1V115.7M224.5 114.1V115.7M225.5 114.0V115.8M226.5 114.0V115.8M227.5 113.9V115.9M228.5 113.8V116.0M229.5 114.0V115.8M230.5 113.8V116.0M231.5 113.9V115.9M232.5 114.0V115.8M233.5 113.8V116.0M234.5 114.0V115.8M235.5 114.1V115.7M236.5 113.9V115.9M237.5 113.8V116.0M238.5 113.8V116.0M239.5 114.0V115.8M240.5 113.8V116.0M241.5 114.0V115.8M242.5 114.0V115.8M243.5 114.0V115.8M244.5 113.9V115.9M245.5 114.0V115.8M246.5 114.0V115.8M247.5 113.9V115.9M248.5 113.8V116.0M249.5 113.8V116.0M250.5 114.0V115.8M251.5 113.8V116.0M252.5 113.9V115.9M253.5 113.8V116.0M254.5 113.9V115.9M255.5 114.0V115.8M256.5 114.0V115.8M257.5 114.0V115.8M258.5 113.9V115.9M259.5 114.0V115.8M260.5 113.9V115.9" stroke="#6464dc" stroke-width="1" fill="none"/><path d="M385.5 110.7V119.1M386.5 112.4V118.9M387.5 111.6V117.6M388.5 111.6V118.2M389.5 111.5V118.3M390.5 110.2V119.5M391.5 111.7V117.8M392.5 112.6V118.0M393.5 111.8V119.0M394.5 111.5V117.7M395.5 112.2V117.3M396.5 111.0V118.2M397.5 110.8V118.8M398.5 110.6V118.9M399.5 111.6V119.6M400.5 112.0V119.1M401.5 111.5V118.5M402.5 110.7V118.3M403.5 111.7V119.2M404.5 110.0V120.1M405.5 104.5V124.6M406.5 98.0V131.8M407.5 91.2V136.0M408.5 98.1V132.4M409.5 97.7V131.4M410.5 92.0V136.0M411.5 86.5V144.0M412.5 82.9V148.1M413.5 76.2V148.8M414.5 74.7V155.1M415.5 74.7V155.1M416.5 74.7V155.1M417.5 74.7V155.1M418.5 74.7V155.1M419.5 92.3V137.1M420.5 92.1V136.0M421.5 74.7V155.1M422.5 74.7V155.1M423.5 74.7V155.1M424.5 74.7V155.1M425.5 74.7V155.1M426.5 74.7V155.1M427.5 74.7V155.1M428.5 74.7V155.1M429.5 74.7V155.1M430.5 74.7V155.1M431.5 74.7V155.1M432.5 83.2V147.3M433.5 102.5V127.4M434.5 83.7V148.3M435.5 74.7V155.1M436.5 74.7V155.1M437.5 74.7V155.1M438.5 74.7V155.1M439.5 74.7V155.1M440.5 74.7V155.1M441.5 74.7V155.1M442.5 74.7V155.1M443.5 74.7V155.1M444.5 74.7V155.1M445.5 85.7V143.1M446.5 99.2V129.6M447.5 83.4V143.7M448.5 74.7V155.1M449.5 74.7V155.1M450.5 74.7V155.1M451.5 74.7V155.1M452.5 74.7V155.1M453.5 74.7V155.1M454.5 74.7V155.1M455.5 74.7V155.1M456.5 74.7V155.1M457.5 74.7V155.1M458.5 74.7V155.1M459.5 74.7V155.1M460.5 78.8V147.1M461.5 87.6V140.3M462.5 97.0V131.8M463.5 108.3V121.7M464.5 93.5V134.6M465.5 74.7V155.1M466.5 74.7V155.1M467.5 74.7V155.1M468.5 74.7V155.1M469.5 74.7V155.1M470.5 74.7V155.1M471.5 74.7V155.1M472.5 74.7V155.1M473.5 74.7V155.1M474.5 74.7V155.1M475.5 74.7V155.1M476.5 74.7V155.1M477.5 74.7V155.1M478.5 74.7V155.1M479.5 74.7V155.1M480.5 78.8V150.2M481.5 88.0V141.6M482.5 96.9V132.9M483.5 103.5V125.8M484.5 82.3V146.6M485.5 74.7V155.1M486.5 74.7V155.1M487.5 74.7V155.1M488.5 74.7V155.1M489.5 74.7V155.1M490.5 74.7V155.1M491.5 74.7V155.1M492.5 74.7V155.1M493.5 74.7V155.1M494.5 74.7V155.1M495.5 74.7V155.1M496.5 74.7V155.1M497.5 74.7V155.1M498.5 85.1V145.4M499.5 95.2V134.2M500.5 95.8V132.3M501.5 74.7V155.1M502.5 74.7V155.1M503.5 74.7V155.1M504.5 74.7V155.1M505.5 74.7V155.1M506.5 74.7V155.1M507.5 74.7V155.1M508.5 74.7V155.1M509.5 74.7V155.1M510.5 74.7V155.1M511.5 82.7V144.5M512.5 93.2V134.6M513.5 101.1V129.0M514.5 105.6V124.4M515.5 90.1V138.2M516.5 78.9V151.1M517.5 83.9V144.3M518.5 83.3V146.6M519.5 82.9V144.4M520.5 81.6V146.8M521.5 78.7V148.9M522.5 79.4V148.9M523.5 79.0V149.5M524.5 80.0V151.6M525.5 81.6V144.3M526.5 91.2V138.6M527.5 100.1V129.2M528.5 108.0V124.0M529.5 99.7V129.9M530.5 88.8V141.9M531.5 81.1V146.1M532.5 74.7V155.1M533.5 74.7V155.1M534.5 74.7V155.1M535.5 74.7V155.1M536.5 85.2V144.7M537.5 82.5V146.6M538.5 74.7V155.1M539.5 74.7V155.1M540.5 74.7V155.1M541.5 74.7V155.1M542.5 74.7V155.1M543.5 74.7V155.1M544.5 84.5V145.5M545.5 90.3V139.3M546.5 74.7V155.1M547.5 74.7V155.1M548.5 74.7V155.1M549.5 74.7V155.1M550.5 83.5V142.1M551.5 87.0V142.8M552.5 92.9V133.7M553.5 98.6V130.4M554.5 108.6V118.2M555.5 110.3V118.2M556.5 110.7V118.1M557.5 111.8V119.1M558.5 111.5V119.0M559.5 111.6V120.0M560.5 112.1V118.8M561.5 110.6V119.5M562.5 110.5V118.5M563.5 111.0V117.7M564.5 110.4V118.1M565.5 110.3V118.6M566.5 110.3V119.7M567.5 111.8V118.5M568.5 111.5V117.7M569.5 109.9V118.5M570.5 111.3V118.7M571.5 111.5V119.1M572.5 110.9V119.7M573.5 110.3V118.3M574.5 110.4V119.1M575.5 110.3V117.8M576.5 111.3V118.8M577.5 110.4V119.0M578.5 111.7V118.6M579.5 111.6V119.8M580.5 110.4V118.4M581.5 111.5V117.8M582.5 111.9V118.6M583.5 110.2V119.7M584.5 110.8V119.7M585.5 112.0V118.1M586.5 110.7V118.4M587.5 110.5V118.1M588.5 110.8V118.4M589.5 111.5V119.5M590.5 111.1V119.1M591.5 110.6V119.2M592.5 110.2V119.2M593.5 111.6V118.9M594.5 111.5V118.4M595.5 110.2V118.3M596.5 110.3V117.9M597.5 112.0V117.6M598.5 111.5V119.5M599.5 110.6V118.4M600.5 111.9V119.2M601.5 112.1V118.3M602.5 112.5V118.3M603.5 113.1V116.8M604.5 113.1V116.5M605.5 113.3V116.5M606.5 113.2V116.6M607.5 113.5V116.4M608.5 113.1V117.0M609.5 113.0V117.1M610.5 112.8V116.8M611.5 112.6V116.6M612.5 113.0V116.6M613.5 113.0V116.8M614.5 112.6V117.2M615.5 113.1V116.6M616.5 113.5V116.3M617.5 113.5V117.1M618.5 112.7V116.3M619.5 112.9V116.2M620.5 113.3V116.4M621.5 113.0V116.3M622.5 113.0V116.2M623.5 113.4V116.6M624.5 113.5V116.6M625.5 113.4V117.0M626.5 113.2V116.8M627.5 113.5V116.6M628.5 113.5V116.3M629.5 113.6V116.3M630.5 113.1V116.9M631.5 113.0V116.6M632.5 113.5V116.2M633.5 113.1V116.3M634.5 113.4V116.5M635.5 113.3V116.8M636.5 113.2V116.5M637.5 113.1V116.9M638.5 113.1V116.7M639.5 113.7V116.5" stroke="#3232c8" stroke-width="1" fill="none"/><path d="M385.5 114.2V115.6M386.5 114.1V115.7M387.5 114.1V115.7M388.5 114.1V115.7M389.5 114.1V115.7M390.5 114.1V115.7M391.5 114.1V115.7M392.5 114.1V115.7M393.5 114.1V115.7M394.5 114.1V115.7M395.5 114.0V115.8M396.5 114.1V115.7M397.5 114.0V115.8M398.5 114.0V115.8M399.5 114.0V115.8M400.5 114.0V115.8M401.5 114.0V115.8M402.5 113.9V115.9M403.5 113.9V115.9M404.5 112.8V117.0M405.5 111.4V118.4M406.5 110.0V119.8M407.5 108.1V121.7M408.5 107.7V122.1M409.5 107.0V122.8M410.5 106.3V123.5M411.5 104.5V125.3M412.5 102.8V127.0M413.5 101.2V128.6M414.5 100.8V129.0M415.5 97.9V131.9M416.5 96.9V132.9M417.5 95.3V134.5M418.5 92.2V137.6M419.5 98.7V131.1M420.5 97.5V132.3M421.5 90.1V139.7M422.5 86.8V143.0M423.5 89.0V140.8M424.5 87.7V142.1M425.5 88.6V141.2M426.5 87.0V142.8M427.5 90.1V139.7M428.5 88.3V141.5M429.5 92.1V137.7M430.5 90.9V138.9M431.5 95.8V134.0M432.5 99.8V130.0M433.5 105.1V124.7M434.5 97.5V132.3M435.5 90.7V139.1M436.5 88.4V141.4M437.5 88.5V141.3M438.5 89.4V140.4M439.5 92.6V137.2M440.5 92.9V136.9M441.5 94.7V135.1M442.5 94.3V135.5M443.5 94.2V135.6M444.5 97.3V132.5M445.5 101.4V128.4M446.5 107.0V122.8M447.5 100.5V129.3M448.5 95.5V134.3M449.5 92.7V137.1M450.5 93.6V136.2M451.5 91.7V138.1M452.5 91.8V138.0M453.5 91.1V138.7M454.5 92.2V137.6M455.5 90.1V139.7M456.5 92.6V137.2M457.5 92.0V137.8M458.5 92.8V137.0M459.5 94.1V135.7M460.5 96.0V133.8M461.5 99.7V130.1M462.5 106.3V123.5M463.5 110.6V119.2M464.5 104.1V125.7M465.5 96.0V133.8M466.5 92.4V137.4M467.5 91.0V138.8M468.5 92.2V137.6M469.5 91.7V138.1M470.5 91.9V137.9M471.5 93.8V136.0M472.5 94.2V135.6M473.5 93.2V136.6M474.5 94.2V135.6M475.5 92.6V137.2M476.5 94.1V135.7M477.5 94.6V135.2M478.5 94.5V135.3M479.5 95.1V134.7M480.5 96.4V133.4M481.5 100.3V129.5M482.5 104.6V125.2M483.5 104.9V124.9M484.5 96.5V133.3M485.5 92.6V137.2M486.5 92.2V137.6M487.5 90.2V139.6M488.5 91.7V138.1M489.5 91.4V138.4M490.5 90.3V139.5M491.5 91.4V138.4M492.5 92.5V137.3M493.5 90.8V139.0M494.5 92.8V137.0M495.5 94.3V135.5M496.5 93.0V136.8M497.5 96.3V133.5M498.5 98.0V131.8M499.5 104.5V125.3M500.5 99.0V130.8M501.5 94.0V135.8M502.5 92.0V137.8M503.5 92.9V136.9M504.5 92.4V137.4M505.5 95.6V134.2M506.5 94.8V135.0M507.5 97.0V132.8M508.5 96.7V133.1M509.5 97.4V132.4M510.5 98.0V131.8M511.5 99.9V129.9M512.5 101.6V128.2M513.5 104.6V125.2M514.5 106.9V122.9M515.5 104.0V125.8M516.5 101.5V128.3M517.5 98.8V131.0M518.5 98.8V131.0M519.5 99.3V130.5M520.5 98.8V131.0M521.5 98.5V131.3M522.5 98.2V131.6M523.5 100.1V129.7M524.5 98.5V131.3M525.5 101.0V128.8M526.5 103.9V125.9M527.5 107.3V122.5M528.5 109.3V120.5M529.5 106.3V123.5M530.5 102.1V127.7M531.5 96.8V133.0M532.5 93.6V136.2M533.5 91.2V138.6M534.5 91.3V138.5M535.5 93.4V136.4M536.5 98.4V131.4M537.5 98.8V131.0M538.5 88.7V141.1M539.5 84.6V145.2M540.5 83.8V146.0M541.5 85.6V144.2M542.5 87.7V142.1M543.5 89.9V139.9M544.5 99.3V130.5M545.5 105.3V124.5M546.5 96.3V133.5M547.5 95.8V134.0M548.5 95.2V134.6M549.5 95.5V134.3M550.5 100.9V128.9M551.5 104.0V125.8M552.5 106.2V123.6M553.5 110.2V119.6M554.5 112.7V117.1M555.5 113.7V116.1M556.5 113.7V116.1M557.5 113.8V116.0M558.5 113.8V116.0M559.5 113.9V115.9M560.5 113.8V116.0M561.5 113.8V116.0M562.5 113.9V115.9M563.5 113.9V115.9M564.5 113.8V116.0M565.5 113.8V116.0M566.5 113.9V115.9M567.5 113.9V115.9M568.5 113.9V115.9M569.5 113.9V115.9M570.5 113.9V115.9M571.5 113.9V115.9M572.5 114.0V115.8M573.5 113.9V115.9M574.5 113.9V115.9M575.5 113.9V115.9M576.5 113.9V115.9M577.5 114.0V115.8M578.5 114.0V115.8M579.5 114.0V115.8M580.5 114.0V115.8M581.5 114.0V115.8M582.5 114.0V115.8M583.5 114.0V115.8M584.5 114.0V115.8M585.5 114.1V115.7M586.5 114.0V115.8M587.5 114.0V115.8M588.5 114.0V115.8M589.5 114.0V115.8M590.5 114.0V115.8M591.5 114.0V115.8M592.5 114.0V115.8M593.5 114.1V115.7M594.5 114.1V115.7M595.5 114.1V115.7M596.5 114.1V115.7M597.5 114.1V115.7M598.5 114.1V115.7M599.5 114.1V115.7M600.5 114.1V115.7M601.5 114.2V115.6M602.5 114.2V115.6M603.5 114.2V115.6M604.5 114.2V115.6M605.5 114.2V115.6M606.5 114.2V115.6M607.5 114.2V115.6M608.5 114.2V115.6M609.5 114.2V115.6M610.5 114.2V115.6M611.5 114.2V115.6M612.5 114.2V115.6M613.5 114.2V115.6M614.5 114.2V115.6M615.5 114.3V115.5M616.5 114.2V115.6M617.5 114.3V115.5M618.5 114.3V115.5M619.5 114.3V115.5M620.5 114.3V115.5M621.5 114.3V115.5M622.5 114.3V115.5M623.5 114.3V115.5M624.5 114.4V115.4M625.5 114.3V115.5M626.5 114.3V115.5M627.5 114.4V115.4M628.5 114.4V115.4M629.5 114.4V115.4M630.5 114.3V115.5M631.5 114.4V115.4M632.5 114.4V115.4M635.5 114.4V115.4" stroke="#6464dc" stroke-width="1" fill="none"/><path d="M260.9 74.8V155.0M384.6 74.8V155.0" stroke="#6e6e6e" stroke-width="1"/><path d="M74.5 198.9V202.1M75.5 198.2V202.3M76.5 194.8V205.8M77.5 198.1V206.2M78.5 195.4V201.4M79.5 195.3V202.5M80.5 194.1V201.7M81.5 195.6V206.3M82.5 196.7V204.4M83.5 196.2V205.3M84.5 195.6V204.2M85.5 193.6V204.9M86.5 189.9V207.5M87.5 194.8V213.8M88.5 194.9V207.7M89.5 189.8V212.4M90.5 190.7V207.9M91.5 192.4V210.0M92.5 193.3V207.3M93.5 195.8V208.3M94.5 196.7V205.8M95.5 193.7V204.3M96.5 194.8V206.8M97.5 196.2V204.2M98.5 197.7V206.4M99.5 193.5V205.0M100.5 195.2V207.5M101.5 195.5V206.1M102.5 194.6V208.2M103.5 193.0V205.2M104.5 185.2V212.5M105.5 166.0V233.8M106.5 166.4V231.3M107.5 173.5V223.4M108.5 163.3V232.9M109.5 165.6V231.9M110.5 174.1V225.1M111.5 177.4V219.8M112.5 171.2V228.4M113.5 161.9V237.3M114.5 159.8V240.1M115.5 161.7V236.6M116.5 170.8V226.3M117.5 164.6V232.0M118.5 159.8V240.1M119.5 170.4V227.4M120.5 184.1V214.8M121.5 175.3V222.8M122.5 164.8V234.0M123.5 159.8V240.1M124.5 159.8V240.1M125.5 164.0V233.3M126.5 171.3V228.5M127.5 173.5V224.5M128.5 172.6V227.6M129.5 173.4V224.0M130.5 178.8V219.8M131.5 187.1V211.8M132.5 195.5V205.6M133.5 196.7V205.2M134.5 187.2V213.0M135.5 166.7V231.9M136.5 159.8V240.1M137.5 159.8V240.1M138.5 159.8V240.1M139.5 159.8V240.1M140.5 159.8V240.1M141.5 159.8V240.1M142.5 159.8V240.1M143.5 163.5V237.8M144.5 165.5V232.4M145.5 159.8V240.1M146.5 159.8V240.1M147.5 164.6V232.9M148.5 159.8V240.1M149.5 163.2V233.4M150.5 170.7V230.0M151.5 177.2V221.3M152.5 187.4V212.1M153.5 176.3V223.7M154.5 173.1V224.1M155.5 175.4V223.0M156.5 186.0V214.0M157.5 197.4V204.5M158.5 196.4V203.1M159.5 185.1V213.9M160.5 168.4V229.8M161.5 159.8V240.1M162.5 159.8V240.1M163.5 165.1V230.9M164.5 177.1V223.8M165.5 184.3V214.1M166.5 183.3V215.2M167.5 182.1V216.1M168.5 179.6V219.1M169.5 179.7V218.6M170.5 180.5V216.5M171.5 186.3V212.5M172.5 181.3V217.6M173.5 182.2V215.8M174.5 190.8V209.2M175.5 183.7V214.7M176.5 172.9V224.1M177.5 171.7V225.1M178.5 173.7V223.7M179.5 178.2V221.3M180.5 180.6V217.3M181.5 181.9V218.0M182.5 182.0V217.8M183.5 181.5V218.0M184.5 182.6V216.9M185.5 187.3V211.4M186.5 194.3V203.9M187.5 197.4V203.0M188.5 198.2V201.7M189.5 197.2V202.7M190.5 187.8V211.8M191.5 164.5V232.1M192.5 159.8V240.1M193.5 159.8V240.1M194.5 159.8V240.1M195.5 159.8V240.1M196.5 159.8V240.1M197.5 159.8V240.1M198.5 167.0V233.5M199.5 161.9V233.2M200.5 163.8V231.2M201.5 171.8V228.8M202.5 174.0V223.4M203.5 170.1V230.5M204.5 164.8V230.5M205.5 169.3V229.3M206.5 170.5V229.4M207.5 176.1V223.1M208.5 175.9V221.7M209.5 177.1V220.6M210.5 172.4V226.7M211.5 171.8V228.3M212.5 179.6V219.0M213.5 190.8V209.2M214.5 196.3V202.3M215.5 188.2V210.7M216.5 182.7V215.8M217.5 187.3V211.4M218.5 193.2V206.5M219.5 194.3V206.7M220.5 187.9V211.7M221.5 195.3V205.4M222.5 195.4V204.6M223.5 197.0V202.4M224.5 196.4V203.8M225.5 196.7V203.3M226.5 197.3V202.7M227.5 197.2V202.7M228.5 197.1V202.9M229.5 197.2V202.5M230.5 197.4V202.8M231.5 197.4V202.9M232.5 197.4V202.7M233.5 197.3V202.2M234.5 197.5V202.3M235.5 197.5V202.4M236.5 197.4V202.5M237.5 197.4V202.4M238.5 197.2V202.3M239.5 197.7V202.0M240.5 198.0V202.3M241.5 198.0V202.1M242.5 197.9V202.1M243.5 197.4V202.1M244.5 197.5V202.1M245.5 197.6V202.4M246.5 198.0V202.1M247.5 197.8V201.9M248.5 197.5V202.4M249.5 197.5V202.4M250.5 197.3V202.4M251.5 197.8V202.0M252.5 198.0V202.2M253.5 197.6V202.2M254.5 197.9V202.2M255.5 197.6V202.4M256.5 197.5V202.1M257.5 197.6V202.2M258.5 197.6V202.3M259.5 197.5V202.2M260.5 197.8V202.3" stroke="#3232c8" stroke-width="1" fill="none"/><path d="M74.5 199.4V200.5M75.5 199.3V200.6M76.5 199.4V200.5M77.5 199.3V200.6M78.5 199.3V200.6M79.5 199.1V200.8M80.5 199.4V200.5M81.5 199.3V200.6M82.5 199.3V200.6M83.5 199.2V200.7M84.5 199.3V200.6M85.5 199.3V200.6M86.5 199.1V200.8M87.5 199.1V200.8M88.5 199.1V200.8M89.5 199.2V200.7M90.5 199.2V200.7M91.5 199.0V200.9M92.5 199.2V200.7M93.5 199.1V200.8M94.5 199.0V200.9M95.5 199.1V200.8M96.5 199.0V200.9M97.5 199.2V200.7M98.5 198.9V201.0M99.5 199.1V200.8M100.5 198.9V201.0M101.5 199.1V200.8M102.5 198.1V201.8M103.5 196.5V203.4M104.5 194.4V205.5M105.5 191.5V208.4M106.5 189.3V210.6M107.5 186.3V213.6M108.5 186.6V213.3M109.5 188.8V211.1M110.5 189.3V210.6M111.5 189.2V210.7M112.5 184.8V215.1M113.5 183.0V216.9M114.5 184.4V215.5M115.5 186.3V213.6M116.5 183.5V216.4M117.5 185.0V214.9M118.5 187.1V212.8M119.5 187.4V212.5M120.5 187.8V212.1M121.5 188.1V211.8M122.5 187.5V212.4M123.5 188.9V211.0M124.5 189.7V210.2M125.5 189.5V210.4M126.5 190.6V209.3M127.5 189.0V210.9M128.5 190.5V209.4M129.5 191.6V208.3M130.5 195.3V204.6M131.5 196.3V203.6M132.5 198.3V201.6M133.5 197.4V202.5M134.5 197.1V202.8M135.5 191.1V208.8M136.5 186.4V213.5M137.5 184.2V215.7M138.5 173.8V226.1M139.5 180.6V219.3M140.5 174.2V225.7M141.5 173.1V226.8M142.5 176.3V223.6M143.5 179.3V220.6M144.5 183.1V216.8M145.5 183.2V216.7M146.5 184.1V215.8M147.5 184.2V215.7M148.5 186.4V213.5M149.5 187.5V212.4M150.5 188.7V211.2M151.5 193.5V206.4M152.5 197.1V202.8M153.5 192.6V207.3M154.5 188.8V211.1M155.5 190.2V209.7M156.5 196.0V203.9M157.5 198.2V201.7M158.5 197.3V202.6M159.5 195.8V204.1M160.5 190.8V209.1M161.5 186.1V213.8M162.5 189.5V210.4M163.5 191.7V208.2M164.5 191.2V208.7M165.5 193.1V206.8M166.5 192.5V207.4M167.5 192.6V207.3M168.5 190.1V209.8M169.5 191.4V208.5M170.5 192.5V207.4M171.5 192.2V207.7M172.5 192.3V207.6M173.5 195.7V204.2M174.5 198.2V201.7M175.5 196.1V203.8M176.5 192.1V207.8M177.5 188.5V211.4M178.5 187.9V212.0M179.5 191.0V208.9M180.5 190.8V209.1M181.5 193.0V206.9M182.5 190.6V209.3M183.5 191.5V208.4M184.5 194.9V205.0M185.5 197.6V202.3M186.5 198.1V201.8M187.5 198.8V201.1M188.5 199.3V200.6M189.5 197.8V202.1M190.5 192.2V207.7M191.5 190.7V209.2M192.5 184.9V215.0M193.5 182.6V217.3M194.5 179.4V220.5M195.5 183.0V216.9M196.5 183.6V216.3M197.5 180.7V219.2M198.5 182.4V217.5M199.5 184.5V215.4M200.5 185.2V214.7M201.5 186.0V213.9M202.5 189.4V210.5M203.5 187.8V212.1M204.5 185.4V214.5M205.5 187.3V212.6M206.5 189.1V210.8M207.5 192.3V207.6M208.5 191.1V208.8M209.5 192.8V207.1M210.5 191.3V208.6M211.5 192.0V207.9M212.5 195.8V204.1M213.5 197.5V202.4M214.5 198.1V201.8M215.5 196.5V203.4M216.5 196.6V203.3M217.5 197.4V202.5M218.5 197.0V202.9M219.5 197.3V202.6M220.5 197.9V202.0M221.5 198.5V201.4M222.5 199.1V200.8M223.5 199.1V200.8M224.5 199.1V200.8M225.5 199.1V200.8M226.5 199.0V200.9M227.5 199.0V200.9M228.5 198.8V201.1M229.5 199.1V200.8M230.5 198.9V201.0M231.5 198.9V201.0M232.5 199.1V200.8M233.5 198.8V201.1M234.5 199.1V200.8M235.5 199.1V200.8M236.5 198.9V201.0M237.5 198.8V201.1M238.5 198.9V201.0M239.5 199.0V200.9M240.5 198.8V201.1M241.5 199.0V200.9M242.5 199.1V200.8M243.5 199.1V200.8M244.5 198.9V201.0M245.5 199.1V200.8M246.5 199.1V200.8M247.5 198.9V201.0M248.5 198.8V201.1M249.5 198.9V201.0M250.5 199.0V200.9M251.5 198.9V201.0M252.5 199.0V200.9M253.5 198.8V201.1M254.5 199.0V200.9M255.5 199.0V200.9M256.5 199.0V200.9M257.5 199.0V200.9M258.5 199.0V200.9M259.5 199.1V200.8M260.5 199.0V200.9" stroke="#6464dc" stroke-width="1" fill="none"/><path d="M385.5 195.8V204.1M386.5 197.4V203.9M387.5 196.6V202.6M388.5 196.6V203.2M389.5 196.5V203.3M390.5 195.3V204.5M391.5 196.7V202.8M392.5 197.6V203.1M393.5 196.8V204.1M394.5 196.5V202.8M395.5 197.2V202.3M396.5 196.1V203.3M397.5 195.9V203.8M398.5 195.6V204.0M399.5 196.6V204.6M400.5 197.0V204.1M401.5 196.5V203.5M402.5 195.7V203.3M403.5 196.8V204.2M404.5 195.1V205.1M405.5 189.6V209.7M406.5 183.1V216.8M407.5 176.2V221.1M408.5 183.2V217.4M409.5 182.7V216.4M410.5 177.0V221.0M411.5 171.6V229.0M412.5 168.0V233.1M413.5 161.3V233.8M414.5 159.8V240.1M415.5 159.8V240.1M416.5 159.8V240.1M417.5 159.8V240.1M418.5 159.8V240.1M419.5 177.4V222.2M420.5 177.2V221.0M421.5 159.8V240.1M422.5 159.8V240.1M423.5 159.8V240.1M424.5 159.8V240.1M425.5 159.8V240.1M426.5 159.8V240.1M427.5 159.8V240.1M428.5 159.8V240.1M429.5 159.8V240.1M430.5 159.8V240.1M431.5 159.8V240.1M432.5 168.3V232.4M433.5 187.6V212.4M434.5 168.8V233.3M435.5 159.8V240.1M436.5 159.8V240.1M437.5 159.8V240.1M438.5 159.8V240.1M439.5 159.8V240.1M440.5 159.8V240.1M441.5 159.8V240.1M442.5 159.8V240.1M443.5 159.8V240.1M444.5 159.8V240.1M445.5 170.8V228.1M446.5 184.3V214.6M447.5 168.5V228.7M448.5 159.8V240.1M449.5 159.8V240.1M450.5 159.8V240.1M451.5 159.8V240.1M452.5 159.8V240.1M453.5 159.8V240.1M454.5 159.8V240.1M455.5 159.8V240.1M456.5 159.8V240.1M457.5 159.8V240.1M458.5 159.8V240.1M459.5 159.8V240.1M460.5 163.9V232.1M461.5 172.7V225.3M462.5 182.1V216.8M463.5 193.3V206.8M464.5 178.5V219.6M465.5 159.8V240.1M466.5 159.8V240.1M467.5 159.8V240.1M468.5 159.8V240.1M469.5 159.8V240.1M470.5 159.8V240.1M471.5 159.8V240.1M472.5 159.8V240.1M473.5 159.8V240.1M474.5 159.8V240.1M475.5 159.8V240.1M476.5 159.8V240.1M477.5 159.8V240.1M478.5 159.8V240.1M479.5 159.8V240.1M480.5 163.9V235.2M481.5 173.1V226.6M482.5 182.0V217.9M483.5 188.6V210.9M484.5 167.4V231.6M485.5 159.8V240.1M486.5 159.8V240.1M487.5 159.8V240.1M488.5 159.8V240.1M489.5 159.8V240.1M490.5 159.8V240.1M491.5 159.8V240.1M492.5 159.8V240.1M493.5 159.8V240.1M494.5 159.8V240.1M495.5 159.8V240.1M496.5 159.8V240.1M497.5 159.8V240.1M498.5 170.2V230.4M499.5 180.3V219.2M500.5 180.9V217.3M501.5 159.8V240.1M502.5 159.8V240.1M503.5 159.8V240.1M504.5 159.8V240.1M505.5 159.8V240.1M506.5 159.8V240.1M507.5 159.8V240.1M508.5 159.8V240.1M509.5 159.8V240.1M510.5 159.8V240.1M511.5 167.8V229.5M512.5 178.3V219.7M513.5 186.1V214.0M514.5 190.6V209.4M515.5 175.2V223.2M516.5 164.0V236.2M517.5 169.0V229.3M518.5 168.3V231.6M519.5 168.0V229.4M520.5 166.7V231.8M521.5 163.8V233.9M522.5 164.5V233.9M523.5 164.1V234.5M524.5 165.1V236.6M525.5 166.7V229.3M526.5 176.3V223.7M527.5 185.1V214.2M528.5 193.1V209.0M529.5 184.7V214.9M530.5 173.9V227.0M531.5 166.2V231.1M532.5 159.8V240.1M533.5 159.8V240.1M534.5 159.8V240.1M535.5 159.8V240.1M536.5 170.3V229.7M537.5 167.6V231.6M538.5 159.8V240.1M539.5 159.8V240.1M540.5 159.8V240.1M541.5 159.8V240.1M542.5 159.8V240.1M543.5 159.8V240.1M544.5 169.6V230.5M545.5 175.4V224.3M546.5 159.8V240.1M547.5 159.8V240.1M548.5 159.8V240.1M549.5 159.8V240.1M550.5 168.6V227.1M551.5 172.1V227.9M552.5 178.0V218.8M553.5 183.7V215.5M554.5 193.6V203.3M555.5 195.3V203.2M556.5 195.8V203.2M557.5 196.8V204.2M558.5 196.6V204.1M559.5 196.7V205.0M560.5 197.2V203.9M561.5 195.6V204.5M562.5 195.6V203.5M563.5 196.0V202.8M564.5 195.4V203.1M565.5 195.4V203.6M566.5 195.4V204.7M567.5 196.8V203.6M568.5 196.5V202.7M569.5 195.0V203.5M570.5 196.3V203.7M571.5 196.5V204.2M572.5 196.0V204.8M573.5 195.3V203.4M574.5 195.4V204.2M575.5 195.3V202.9M576.5 196.4V203.9M577.5 195.4V204.1M578.5 196.7V203.7M579.5 196.6V204.8M580.5 195.4V203.5M581.5 196.6V202.8M582.5 196.9V203.6M583.5 195.3V204.7M584.5 195.8V204.7M585.5 197.1V203.1M586.5 195.8V203.4M587.5 195.5V203.1M588.5 195.9V203.5M589.5 196.5V204.5M590.5 196.2V204.1M591.5 195.7V204.2M592.5 195.2V204.2M593.5 196.7V203.9M594.5 196.5V203.4M595.5 195.2V203.3M596.5 195.4V203.0M597.5 197.1V202.6M598.5 196.6V204.6M599.5 195.7V203.5M600.5 196.9V204.2M601.5 197.2V203.3M602.5 197.5V203.3M603.5 198.1V201.8M604.5 198.1V201.6M605.5 198.3V201.6M606.5 198.2V201.7M607.5 198.5V201.5M608.5 198.2V202.1M609.5 198.1V202.1M610.5 197.9V201.9M611.5 197.6V201.7M612.5 198.0V201.6M613.5 198.0V201.8M614.5 197.7V202.2M615.5 198.2V201.7M616.5 198.6V201.4M617.5 198.5V202.1M618.5 197.8V201.3M619.5 197.9V201.3M620.5 198.3V201.4M621.5 198.0V201.3M622.5 198.1V201.3M623.5 198.4V201.7M624.5 198.5V201.7M625.5 198.5V202.0M626.5 198.2V201.8M627.5 198.6V201.6M628.5 198.6V201.3M629.5 198.6V201.4M630.5 198.2V201.9M631.5 198.1V201.6M632.5 198.6V201.3M633.5 198.2V201.4M634.5 198.5V201.5M635.5 198.4V201.8M636.5 198.3V201.6M637.5 198.1V202.0M638.5 198.2V201.7M639.5 198.7V201.6" stroke="#3232c8" stroke-width="1" fill="none"/><path d="M385.5 199.2V200.7M386.5 199.2V200.7M387.5 199.2V200.7M388.5 199.2V200.7M389.5 199.1V200.8M390.5 199.1V200.8M391.5 199.2V200.7M392.5 199.1V200.8M393.5 199.1V200.8M394.5 199.2V200.7M395.5 199.1V200.8M396.5 199.1V200.8M397.5 199.1V200.8M398.5 199.0V200.9M399.5 199.0V200.9M400.5 199.0V200.9M401.5 199.0V200.9M402.5 199.0V200.9M403.5 199.0V200.9M404.5 197.9V202.0M405.5 196.4V203.5M406.5 195.0V204.9M407.5 193.1V206.8M408.5 192.7V207.2M409.5 192.1V207.8M410.5 191.3V208.6M411.5 189.6V210.3M412.5 187.9V212.0M413.5 186.3V213.6M414.5 185.9V214.0M415.5 183.0V216.9M416.5 182.0V217.9M417.5 180.3V219.6M418.5 177.2V222.7M419.5 183.8V216.1M420.5 182.6V217.3M421.5 175.2V224.7M422.5 171.9V228.0M423.5 174.1V225.8M424.5 172.8V227.1M425.5 173.6V226.3M426.5 172.1V227.8M427.5 175.1V224.8M428.5 173.3V226.6M429.5 177.2V222.7M430.5 176.0V223.9M431.5 180.9V219.0M432.5 184.9V215.0M433.5 190.2V209.7M434.5 182.6V217.3M435.5 175.8V224.1M436.5 173.5V226.4M437.5 173.6V226.3M438.5 174.4V225.5M439.5 177.7V222.2M440.5 178.0V221.9M441.5 179.8V220.1M442.5 179.4V220.5M443.5 179.3V220.6M444.5 182.4V217.5M445.5 186.5V213.4M446.5 192.0V207.9M447.5 185.5V214.4M448.5 180.6V219.3M449.5 177.7V222.2M450.5 178.7V221.2M451.5 176.8V223.1M452.5 176.9V223.0M453.5 176.2V223.7M454.5 177.3V222.6M455.5 175.2V224.7M456.5 177.7V222.2M457.5 177.0V222.9M458.5 177.9V222.0M459.5 179.2V220.7M460.5 181.0V218.9M461.5 184.8V215.1M462.5 191.3V208.6M463.5 195.6V204.3M464.5 189.1V210.8M465.5 181.1V218.8M466.5 177.4V222.5M467.5 176.1V223.8M468.5 177.3V222.6M469.5 176.7V223.2M470.5 176.9V223.0M471.5 178.9V221.0M472.5 179.2V220.7M473.5 178.3V221.6M474.5 179.3V220.6M475.5 177.7V222.2M476.5 179.1V220.8M477.5 179.6V220.3M478.5 179.6V220.3M479.5 180.1V219.8M480.5 181.5V218.4M481.5 185.3V214.6M482.5 189.6V210.3M483.5 190.0V209.9M484.5 181.6V218.3M485.5 177.7V222.2M486.5 177.3V222.6M487.5 175.3V224.6M488.5 176.8V223.1M489.5 176.5V223.4M490.5 175.4V224.5M491.5 176.4V223.5M492.5 177.6V222.3M493.5 175.9V224.0M494.5 177.9V222.0M495.5 179.4V220.5M496.5 178.1V221.8M497.5 181.3V218.6M498.5 183.1V216.8M499.5 189.5V210.4M500.5 184.1V215.8M501.5 179.1V220.8M502.5 177.1V222.8M503.5 178.0V221.9M504.5 177.5V222.4M505.5 180.7V219.2M506.5 179.9V220.0M507.5 182.1V217.8M508.5 181.7V218.2M509.5 182.5V217.4M510.5 183.1V216.8M511.5 185.0V214.9M512.5 186.7V213.2M513.5 189.7V210.2M514.5 192.0V207.9M515.5 189.1V210.8M516.5 186.6V213.3M517.5 183.9V216.0M518.5 183.8V216.1M519.5 184.4V215.5M520.5 183.9V216.0M521.5 183.6V216.3M522.5 183.3V216.6M523.5 185.2V214.7M524.5 183.5V216.4M525.5 186.0V213.9M526.5 188.9V211.0M527.5 192.3V207.6M528.5 194.4V205.5M529.5 191.3V208.6M530.5 187.2V212.7M531.5 181.8V218.1M532.5 178.6V221.3M533.5 176.3V223.6M534.5 176.4V223.5M535.5 178.5V221.4M536.5 183.5V216.4M537.5 183.9V216.0M538.5 173.8V226.1M539.5 169.6V230.3M540.5 168.9V231.0M541.5 170.7V229.2M542.5 172.8V227.1M543.5 175.0V224.9M544.5 184.3V215.6M545.5 190.3V209.6M546.5 181.4V218.5M547.5 180.9V219.0M548.5 180.2V219.7M549.5 180.5V219.4M550.5 185.9V214.0M551.5 189.0V210.9M552.5 191.3V208.6M553.5 195.2V204.7M554.5 197.7V202.2M555.5 198.8V201.1M556.5 198.8V201.1M557.5 198.9V201.0M558.5 198.9V201.0M559.5 198.9V201.0M560.5 198.8V201.1M561.5 198.9V201.0M562.5 198.9V201.0M563.5 199.0V200.9M564.5 198.9V201.0M565.5 198.9V201.0M566.5 199.0V200.9M567.5 198.9V201.0M568.5 198.9V201.0M569.5 198.9V201.0M570.5 198.9V201.0M571.5 199.0V200.9M572.5 199.0V200.9M573.5 199.0V200.9M574.5 199.0V200.9M575.5 199.0V200.9M576.5 199.0V200.9M577.5 199.0V200.9M578.5 199.0V200.9M579.5 199.1V200.8M580.5 199.0V200.9M581.5 199.0V200.9M582.5 199.1V200.8M583.5 199.1V200.8M584.5 199.1V200.8M585.5 199.1V200.8M586.5 199.1V200.8M587.5 199.1V200.8M588.5 199.1V200.8M589.5 199.1V200.8M590.5 199.1V200.8M591.5 199.1V200.8M592.5 199.1V200.8M593.5 199.1V200.8M594.5 199.2V200.7M595.5 199.2V200.7M596.5 199.1V200.8M597.5 199.2V200.7M598.5 199.1V200.8M599.5 199.2V200.7M600.5 199.2V200.7M601.5 199.2V200.7M602.5 199.2V200.7M603.5 199.2V200.7M604.5 199.2V200.7M605.5 199.2V200.7M606.5 199.2V200.7M607.5 199.2V200.7M608.5 199.3V200.6M609.5 199.3V200.6M610.5 199.3V200.6M611.5 199.3V200.6M612.5 199.3V200.6M613.5 199.3V200.6M614.5 199.3V200.6M615.5 199.3V200.6M616.5 199.3V200.6M617.5 199.3V200.6M618.5 199.3V200.6M619.5 199.4V200.5M620.5 199.4V200.5M621.5 199.3V200.6M622.5 199.3V200.6M623.5 199.4V200.5M624.5 199.4V200.5M625.5 199.4V200.5M626.5 199.4V200.5M627.5 199.4V200.5M628.5 199.4V200.5M629.5 199.4V200.5M630.5 199.4V200.5M631.5 199.4V200.5M632.5 199.4V200.5M635.5 199.4V200.5" stroke="#6464dc" stroke-width="1" fill="none"/><path d="M260.9 159.9V240.0M384.6 159.9V240.0" stroke="#6e6e6e" stroke-width="1"/><path d="M229.5 281.0V292.9M230.5 275.1V287.5M231.5 281.2V293.6M232.5 276.0V287.8M233.5 280.5V292.8M234.5 276.2V287.5M235.5 280.8V293.4M236.5 276.4V287.6M237.5 280.9V291.7M238.5 275.4V287.6M239.5 280.6V293.8M240.5 274.6V287.4M241.5 280.5V291.9M242.5 276.0V287.8M243.5 280.7V292.4M244.5 275.6V287.3M245.5 280.7V293.8M246.5 274.3V287.7M247.5 280.6V292.0M248.5 274.3V287.8M249.5 280.6V292.1M250.5 275.2V287.2M251.5 280.5V294.0M252.5 275.1V287.2M253.5 280.1V296.1M254.5 269.2V299.1M255.5 259.4V306.7M256.5 246.4V318.9M257.5 244.0V324.2M258.5 244.0V324.2M259.5 244.0V324.2M260.5 244.0V324.2M261.5 244.0V324.2M262.5 244.0V324.2M263.5 244.0V324.2M264.5 244.0V324.2M265.5 244.0V324.2M266.5 244.0V324.2M267.5 244.0V324.2M268.5 244.0V324.2M269.5 244.0V324.2M270.5 258.4V308.7M271.5 252.5V314.4M272.5 247.6V321.2M273.5 249.0V319.0M274.5 255.8V313.8M275.5 249.2V314.5M276.5 244.0V324.2M277.5 244.0V324.2M278.5 246.6V320.4M279.5 251.8V314.5M280.5 249.6V318.6M281.5 244.0V324.2M282.5 244.0V324.2M283.5 244.0V324.2M284.5 244.0V324.2M285.5 244.0V324.2M286.5 244.0V324.2M287.5 250.4V315.1M288.5 257.8V308.9M289.5 255.4V311.3M290.5 255.4V312.7M291.5 255.4V310.6M292.5 258.9V307.3M293.5 259.0V306.1M294.5 260.2V308.5M295.5 263.0V302.6M296.5 266.1V302.2M297.5 267.6V299.2M298.5 264.2V304.5M299.5 263.6V303.4M300.5 264.0V304.0M301.5 269.2V298.2M302.5 274.2V293.5M303.5 260.7V306.2M304.5 244.0V324.2M305.5 244.0V324.2M306.5 244.0V324.2M307.5 244.0V324.2M308.5 244.0V324.2M309.5 244.0V324.2M310.5 244.0V324.2M311.5 244.0V324.2M312.5 244.0V324.2M313.5 244.0V324.2M314.5 244.0V324.2M315.5 244.0V324.2M316.5 244.0V324.2M317.5 254.6V311.9M318.5 256.3V311.8M319.5 244.0V324.2M320.5 244.0V324.2M321.5 244.0V324.2M322.5 244.0V324.2M323.5 244.0V324.2M324.5 244.0V324.2M325.5 244.0V324.2M326.5 244.0V324.2M327.5 244.0V324.2M328.5 244.0V324.2M329.5 244.0V324.2M330.5 260.8V307.3M331.5 256.2V312.9M332.5 244.0V324.2M333.5 244.0V324.2M334.5 247.7V317.8M335.5 244.0V324.2M336.5 244.0V324.2M337.5 244.0V324.2M338.5 244.0V324.2M339.5 244.0V324.2M340.5 252.4V315.9M341.5 266.6V299.0M342.5 263.6V301.7M343.5 258.1V309.5M344.5 256.6V311.6M345.5 260.2V306.2M346.5 265.4V304.0M347.5 262.1V305.7M348.5 257.1V309.6M349.5 260.6V305.9M350.5 273.6V293.6M351.5 277.9V288.9M352.5 271.5V296.1M353.5 268.1V298.8M354.5 261.4V305.3M355.5 257.5V310.4M356.5 258.1V308.4M357.5 261.8V306.0M358.5 262.9V304.2M359.5 269.2V297.6M360.5 269.4V297.3M361.5 270.8V297.8M362.5 275.2V292.5M363.5 279.0V288.6M364.5 281.0V286.0M365.5 281.6V285.5M366.5 282.8V286.7M367.5 282.9V286.7M368.5 281.4V286.5M369.5 281.2V286.4M370.5 282.8V286.8M371.5 281.5V285.5M372.5 281.0V285.5M373.5 281.7V287.0M374.5 282.4V285.9M375.5 281.2V286.2M376.5 281.9V286.2M377.5 282.6V286.5M378.5 281.8V287.1M379.5 280.0V288.5M380.5 280.3V287.8M381.5 278.9V286.6M382.5 279.4V289.4M383.5 280.6V288.6M384.5 281.2V286.8M385.5 281.0V286.9M386.5 278.7V287.1M387.5 280.7V289.1M388.5 281.2V286.8M389.5 280.4V287.4M390.5 280.8V287.2M391.5 281.6V289.6M392.5 280.0V287.7M393.5 279.2V288.1M394.5 278.0V290.9M395.5 279.5V289.5M396.5 281.3V286.9M397.5 279.7V289.5M398.5 281.3V286.7M399.5 281.5V288.6M400.5 278.9V287.0M401.5 281.0V287.6M402.5 281.8V286.4M403.5 281.1V287.3M404.5 279.7V286.1M405.5 280.6V287.8M406.5 280.0V289.5M407.5 280.2V286.5M408.5 279.7V286.5M409.5 278.9V286.4M410.5 280.8V288.8M411.5 281.1V288.5M412.5 279.2V287.0M413.5 278.7V288.5M414.5 281.7V287.8M415.5 279.6V288.5M416.5 280.7V289.7M417.5 279.6V293.3M418.5 281.7V289.4M419.5 281.0V288.6M420.5 280.2V288.3M421.5 281.1V286.6M422.5 279.7V288.7M423.5 279.6V287.3M424.5 280.9V289.1M425.5 280.5V286.9M426.5 281.0V287.1M427.5 280.4V288.6M428.5 279.3V286.4M429.5 281.9V286.3M430.5 279.8V286.6M431.5 280.9V288.4M432.5 279.8V287.9M433.5 281.2V286.4M434.5 281.8V285.7M435.5 281.4V285.4M436.5 281.2V287.1M437.5 281.8V286.4M438.5 281.0V286.6M439.5 281.3V286.2M440.5 281.5V285.3M441.5 281.7V286.2M442.5 282.1V285.6M443.5 282.9V286.2M444.5 282.1V286.3M445.5 281.3V285.5M446.5 281.8V285.4M447.5 282.5V285.4M448.5 281.3V285.8M449.5 281.7V285.5M450.5 281.9V286.8M451.5 281.7V285.8M452.5 281.4V286.7M453.5 281.7V286.0M454.5 282.9V285.3" stroke="#3232c8" stroke-width="1" fill="none"/><path d="M229.5 283.1V285.1M230.5 283.2V285.0M231.5 283.1V285.1M232.5 283.1V285.1M233.5 283.0V285.2M234.5 282.9V285.3M235.5 283.0V285.2M236.5 283.0V285.2M237.5 282.9V285.3M238.5 282.9V285.3M239.5 283.1V285.1M240.5 282.9V285.3M241.5 283.2V285.0M242.5 283.1V285.1M243.5 283.1V285.1M244.5 283.0V285.2M245.5 283.0V285.2M246.5 282.9V285.3M247.5 283.0V285.2M248.5 283.0V285.2M249.5 283.0V285.2M250.5 283.2V285.0M251.5 283.2V285.0M252.5 283.2V285.0M253.5 280.7V287.5M254.5 277.6V290.6M255.5 272.2V296.0M256.5 268.2V300.0M257.5 270.6V297.6M258.5 271.2V297.0M259.5 268.5V299.7M260.5 270.5V297.7M261.5 269.5V298.7M262.5 268.2V300.0M263.5 266.7V301.5M264.5 268.4V299.8M265.5 268.7V299.5M266.5 264.1V304.1M267.5 267.3V300.9M268.5 264.5V303.7M269.5 268.1V300.1M270.5 272.0V296.2M271.5 271.4V296.8M272.5 268.7V299.5M273.5 269.2V299.0M274.5 268.2V300.0M275.5 269.8V298.4M276.5 270.0V298.2M277.5 272.9V295.3M278.5 273.1V295.1M279.5 271.2V297.0M280.5 270.4V297.8M281.5 272.3V295.9M282.5 271.3V296.9M283.5 267.9V300.3M284.5 266.1V302.1M285.5 269.0V299.2M286.5 270.4V297.8M287.5 273.9V294.3M288.5 274.8V293.4M289.5 272.6V295.6M290.5 272.4V295.8M291.5 272.6V295.6M292.5 274.0V294.2M293.5 274.7V293.5M294.5 275.1V293.1M295.5 276.3V291.9M296.5 276.5V291.7M297.5 276.1V292.1M298.5 275.1V293.1M299.5 274.8V293.4M300.5 276.5V291.7M301.5 276.9V291.3M302.5 278.8V289.4M303.5 276.5V291.7M304.5 272.1V296.1M305.5 270.0V298.2M306.5 263.5V304.7M307.5 262.8V305.4M308.5 261.4V306.8M309.5 264.2V304.0M310.5 260.9V307.3M311.5 260.4V307.8M312.5 264.1V304.1M313.5 259.9V308.3M314.5 258.5V309.7M315.5 259.3V308.9M316.5 261.5V306.7M317.5 270.5V297.7M318.5 269.1V299.1M319.5 261.7V306.5M320.5 265.8V302.4M321.5 260.0V308.2M322.5 260.4V307.8M323.5 258.1V310.1M324.5 259.3V308.9M325.5 260.2V308.0M326.5 262.6V305.6M327.5 266.5V301.7M328.5 264.0V304.2M329.5 268.7V299.5M330.5 273.7V294.5M331.5 273.5V294.7M332.5 267.9V300.3M333.5 267.8V300.4M334.5 264.6V303.6M335.5 266.5V301.7M336.5 267.0V301.2M337.5 265.9V302.3M338.5 265.4V302.8M339.5 271.9V296.3M340.5 273.3V294.9M341.5 276.8V291.4M342.5 277.2V291.0M343.5 274.4V293.8M344.5 274.9V293.3M345.5 274.2V294.0M346.5 272.9V295.3M347.5 275.6V292.6M348.5 274.7V293.5M349.5 276.4V291.8M350.5 278.9V289.3M351.5 281.5V286.7M352.5 279.9V288.3M353.5 277.9V290.3M354.5 278.5V289.7M355.5 277.2V291.0M356.5 277.2V291.0M357.5 277.9V290.3M358.5 277.2V291.0M359.5 278.7V289.5M360.5 280.4V287.8M361.5 281.1V287.1M362.5 282.0V286.2M363.5 283.1V285.1M364.5 283.5V284.7M368.5 283.6V284.6M369.5 283.6V284.6M370.5 283.6V284.6M371.5 283.5V284.7M372.5 283.6V284.6M373.5 283.6V284.6M374.5 283.5V284.7M375.5 283.5V284.7M376.5 283.5V284.7M377.5 283.4V284.8M378.5 283.5V284.7M379.5 283.4V284.8M380.5 283.4V284.8M381.5 283.5V284.7M382.5 283.4V284.8M383.5 283.5V284.7M384.5 283.4V284.8M385.5 283.4V284.8M386.5 283.4V284.8M387.5 283.4V284.8M388.5 283.5V284.7M389.5 283.5V284.7M390.5 283.4V284.8M391.5 283.4V284.8M392.5 283.3V284.9M393.5 283.4V284.8M394.5 283.4V284.8M395.5 283.4V284.8M396.5 283.4V284.8M397.5 283.3V284.9M398.5 283.5V284.7M399.5 283.3V284.9M400.5 283.3V284.9M401.5 283.4V284.8M402.5 283.3V284.9M403.5 283.4V284.8M404.5 283.4V284.8M405.5 283.5V284.7M406.5 283.4V284.8M407.5 283.4V284.8M408.5 283.3V284.9M409.5 283.3V284.9M410.5 283.4V284.8M411.5 283.4V284.8M412.5 283.4V284.8M413.5 283.4V284.8M414.5 283.4V284.8M415.5 283.4V284.8M416.5 283.4V284.8M417.5 283.4V284.8M418.5 283.5V284.7M419.5 283.4V284.8M420.5 283.4V284.8M421.5 283.5V284.7M422.5 283.4V284.8M423.5 283.5V284.7M424.5 283.5V284.7M425.5 283.4V284.8M426.5 283.4V284.8M427.5 283.4V284.8M428.5 283.5V284.7M429.5 283.3V284.9M430.5 283.5V284.7M431.5 283.3V284.9M432.5 283.5V284.7M433.5 283.5V284.7" stroke="#6464dc" stroke-width="1" fill="none"/><path d="M228.5 244.1V324.1M455.4 244.1V324.1" stroke="#6e6e6e" stroke-width="1"/><path d="M555.4 244.1V324.1" stroke="#444" stroke-width="1"/><path d="M229.5 365.9V377.9M230.5 360.0V372.4M231.5 366.1V378.6M232.5 360.9V372.7M233.5 365.4V377.7M234.5 361.1V372.4M235.5 365.6V378.4M236.5 361.3V372.5M237.5 365.8V376.7M238.5 360.3V372.5M239.5 365.5V378.8M240.5 359.5V372.3M241.5 365.3V376.8M242.5 360.9V372.7M243.5 365.6V377.3M244.5 360.5V372.2M245.5 365.6V378.7M246.5 359.2V372.6M247.5 365.5V377.0M248.5 359.1V372.7M249.5 365.5V377.1M250.5 360.0V372.2M251.5 365.4V379.0M252.5 360.0V372.1M253.5 365.0V381.1M254.5 354.0V384.1M255.5 344.2V391.7M256.5 331.1V403.9M257.5 328.7V409.3M258.5 328.7V409.3M259.5 328.7V409.3M260.5 328.7V409.3M261.5 328.7V409.3M262.5 328.7V409.3M263.5 328.7V409.3M264.5 328.7V409.3M265.5 328.7V409.3M266.5 328.7V409.3M267.5 328.7V409.3M268.5 328.7V409.3M269.5 328.7V409.3M270.5 343.2V393.7M271.5 337.2V399.5M272.5 332.3V406.3M273.5 333.7V404.1M274.5 340.5V398.8M275.5 334.0V399.5M276.5 328.7V409.3M277.5 328.7V409.3M278.5 331.3V405.5M279.5 336.5V399.5M280.5 334.3V403.6M281.5 328.7V409.3M282.5 328.7V409.3M283.5 328.7V409.3M284.5 328.7V409.3M285.5 328.7V409.3M286.5 328.7V409.3M287.5 335.1V400.1M288.5 342.6V394.0M289.5 340.2V396.3M290.5 340.2V397.8M291.5 340.1V395.6M292.5 343.7V392.3M293.5 343.8V391.1M294.5 345.0V393.5M295.5 347.8V387.6M296.5 350.9V387.2M297.5 352.4V384.1M298.5 349.0V389.5M299.5 348.4V388.4M300.5 348.8V389.0M301.5 354.0V383.2M302.5 359.1V378.4M303.5 345.5V391.2M304.5 328.7V409.3M305.5 328.7V409.3M306.5 328.7V409.3M307.5 328.7V409.3M308.5 328.7V409.3M309.5 328.7V409.3M310.5 328.7V409.3M311.5 328.7V409.3M312.5 328.7V409.3M313.5 328.7V409.3M314.5 328.7V409.3M315.5 328.7V409.3M316.5 328.7V409.3M317.5 339.4V396.9M318.5 341.1V396.9M319.5 328.7V409.3M320.5 328.7V409.3M321.5 328.7V409.3M322.5 328.7V409.3M323.5 328.7V409.3M324.5 328.7V409.3M325.5 328.7V409.3M326.5 328.7V409.3M327.5 328.7V409.3M328.5 328.7V409.3M329.5 328.7V409.3M330.5 345.6V392.3M331.5 341.0V397.9M332.5 328.7V409.3M333.5 328.7V409.3M334.5 332.4V402.9M335.5 328.7V409.3M336.5 328.7V409.3M337.5 328.7V409.3M338.5 328.7V409.3M339.5 328.7V409.3M340.5 337.1V400.9M341.5 351.4V384.0M342.5 348.4V386.7M343.5 342.9V394.5M344.5 341.4V396.6M345.5 344.9V391.2M346.5 350.2V389.0M347.5 346.9V390.7M348.5 341.8V394.6M349.5 345.4V390.9M350.5 358.4V378.6M351.5 362.8V373.8M352.5 356.4V381.1M353.5 352.9V383.8M354.5 346.2V390.3M355.5 342.3V395.4M356.5 342.9V393.4M357.5 346.6V391.0M358.5 347.7V389.2M359.5 354.1V382.5M360.5 354.2V382.3M361.5 355.6V382.8M362.5 360.0V377.4M363.5 363.9V373.5M364.5 365.8V370.9M365.5 366.5V370.4M366.5 367.7V371.6M367.5 367.8V371.6M368.5 366.3V371.4M369.5 366.0V371.3M370.5 367.7V371.7M371.5 366.4V370.4M372.5 365.9V370.4M373.5 366.6V371.9M374.5 367.3V370.8M375.5 366.1V371.1M376.5 366.8V371.1M377.5 367.5V371.4M378.5 366.7V372.0M379.5 364.8V373.4M380.5 365.2V372.7M381.5 363.8V371.5M382.5 364.3V374.3M383.5 365.4V373.6M384.5 366.1V371.7M385.5 365.9V371.8M386.5 363.6V372.0M387.5 365.5V374.1M388.5 366.1V371.7M389.5 365.3V372.3M390.5 365.7V372.1M391.5 366.5V374.6M392.5 364.9V372.7M393.5 364.1V373.0M394.5 362.8V375.9M395.5 364.4V374.4M396.5 366.2V371.8M397.5 364.6V374.4M398.5 366.2V371.6M399.5 366.4V373.5M400.5 363.8V371.9M401.5 365.9V372.5M402.5 366.7V371.3M403.5 366.0V372.3M404.5 364.6V371.0M405.5 365.5V372.7M406.5 364.9V374.4M407.5 365.1V371.4M408.5 364.6V371.4M409.5 363.7V371.3M410.5 365.7V373.8M411.5 366.0V373.4M412.5 364.1V371.9M413.5 363.6V373.4M414.5 366.6V372.7M415.5 364.4V373.4M416.5 365.6V374.7M417.5 364.5V378.3M418.5 366.6V374.3M419.5 365.9V373.5M420.5 365.1V373.3M421.5 366.0V371.6M422.5 364.5V373.6M423.5 364.5V372.2M424.5 365.7V374.0M425.5 365.3V371.8M426.5 365.9V372.0M427.5 365.2V373.6M428.5 364.2V371.3M429.5 366.8V371.3M430.5 364.7V371.5M431.5 365.7V373.4M432.5 364.6V372.8M433.5 366.1V371.3M434.5 366.7V370.6M435.5 366.3V370.3M436.5 366.1V372.1M437.5 366.7V371.3M438.5 365.9V371.5M439.5 366.2V371.1M440.5 366.4V370.2M441.5 366.6V371.1M442.5 367.0V370.5M443.5 367.7V371.1M444.5 367.0V371.2M445.5 366.2V370.4M446.5 366.7V370.3M447.5 367.4V370.3M448.5 366.2V370.7M449.5 366.6V370.4M450.5 366.8V371.8M451.5 366.6V370.7M452.5 366.3V371.6M453.5 366.6V371.0M454.5 367.8V370.3" stroke="#3232c8" stroke-width="1" fill="none"/><path d="M229.5 368.0V370.0M230.5 368.1V369.9M231.5 368.0V370.0M232.5 368.0V370.0M233.5 367.9V370.1M234.5 367.8V370.2M235.5 367.9V370.1M236.5 367.9V370.1M237.5 367.8V370.2M238.5 367.8V370.2M239.5 368.0V370.0M240.5 367.8V370.2M241.5 368.1V369.9M242.5 368.0V370.0M243.5 368.0V370.0M244.5 367.9V370.1M245.5 367.9V370.1M246.5 367.8V370.2M247.5 367.8V370.2M248.5 367.9V370.1M249.5 367.9V370.1M250.5 368.1V369.9M251.5 368.1V369.9M252.5 368.1V369.9M253.5 365.6V372.4M254.5 362.5V375.5M255.5 357.0V381.0M256.5 353.0V385.0M257.5 355.4V382.6M258.5 356.1V381.9M259.5 353.3V384.7M260.5 355.4V382.6M261.5 354.3V383.7M262.5 353.0V385.0M263.5 351.5V386.5M264.5 353.3V384.7M265.5 353.5V384.5M266.5 348.9V389.1M267.5 352.1V385.9M268.5 349.3V388.7M269.5 352.9V385.1M270.5 356.9V381.1M271.5 356.2V381.8M272.5 353.5V384.5M273.5 354.1V383.9M274.5 353.0V385.0M275.5 354.6V383.4M276.5 354.8V383.2M277.5 357.8V380.2M278.5 358.0V380.0M279.5 356.1V381.9M280.5 355.2V382.8M281.5 357.1V380.9M282.5 356.2V381.8M283.5 352.7V385.3M284.5 350.9V387.1M285.5 353.9V384.1M286.5 355.2V382.8M287.5 358.7V379.3M288.5 359.7V378.3M289.5 357.5V380.5M290.5 357.3V380.7M291.5 357.4V380.6M292.5 358.9V379.1M293.5 359.6V378.4M294.5 359.9V378.1M295.5 361.2V376.8M296.5 361.3V376.7M297.5 361.0V377.0M298.5 360.0V378.0M299.5 359.7V378.3M300.5 361.3V376.7M301.5 361.8V376.2M302.5 363.6V374.4M303.5 361.3V376.7M304.5 357.0V381.0M305.5 354.8V383.2M306.5 348.3V389.7M307.5 347.6V390.4M308.5 346.2V391.8M309.5 349.0V389.0M310.5 345.6V392.4M311.5 345.2V392.8M312.5 348.9V389.1M313.5 344.7V393.3M314.5 343.3V394.7M315.5 344.1V393.9M316.5 346.3V391.7M317.5 355.3V382.7M318.5 353.9V384.1M319.5 346.5V391.5M320.5 350.6V387.4M321.5 344.8V393.2M322.5 345.1V392.9M323.5 342.9V395.1M324.5 344.0V394.0M325.5 344.9V393.1M326.5 347.4V390.6M327.5 351.3V386.7M328.5 348.8V389.2M329.5 353.5V384.5M330.5 358.6V379.4M331.5 358.3V379.7M332.5 352.7V385.3M333.5 352.6V385.4M334.5 349.4V388.6M335.5 351.3V386.7M336.5 351.8V386.2M337.5 350.8V387.2M338.5 350.2V387.8M339.5 356.7V381.3M340.5 358.1V379.9M341.5 361.6V376.4M342.5 362.0V376.0M343.5 359.2V378.8M344.5 359.8V378.2M345.5 359.1V378.9M346.5 357.8V380.2M347.5 360.5V377.5M348.5 359.5V378.5M349.5 361.3V376.7M350.5 363.7V374.3M351.5 366.4V371.6M352.5 364.8V373.2M353.5 362.8V375.2M354.5 363.4V374.6M355.5 362.1V375.9M356.5 362.0V376.0M357.5 362.7V375.3M358.5 362.0V376.0M359.5 363.6V374.4M360.5 365.3V372.7M361.5 366.0V372.0M362.5 366.9V371.1M363.5 368.0V370.0M364.5 368.4V369.6M368.5 368.5V369.5M369.5 368.5V369.5M370.5 368.5V369.5M371.5 368.4V369.6M372.5 368.5V369.5M373.5 368.5V369.5M374.5 368.4V369.6M375.5 368.4V369.6M376.5 368.4V369.6M377.5 368.3V369.7M378.5 368.4V369.6M379.5 368.3V369.7M380.5 368.3V369.7M381.5 368.4V369.6M382.5 368.3V369.7M383.5 368.4V369.6M384.5 368.3V369.7M385.5 368.3V369.7M386.5 368.3V369.7M387.5 368.3V369.7M388.5 368.4V369.6M389.5 368.4V369.6M390.5 368.2V369.8M391.5 368.3V369.7M392.5 368.2V369.8M393.5 368.3V369.7M394.5 368.3V369.7M395.5 368.3V369.7M396.5 368.3V369.7M397.5 368.2V369.8M398.5 368.3V369.7M399.5 368.2V369.8M400.5 368.2V369.8M401.5 368.3V369.7M402.5 368.2V369.8M403.5 368.3V369.7M404.5 368.3V369.7M405.5 368.4V369.6M406.5 368.3V369.7M407.5 368.3V369.7M408.5 368.2V369.8M409.5 368.2V369.8M410.5 368.3V369.7M411.5 368.3V369.7M412.5 368.3V369.7M413.5 368.3V369.7M414.5 368.3V369.7M415.5 368.3V369.7M416.5 368.3V369.7M417.5 368.3V369.7M418.5 368.4V369.6M419.5 368.3V369.7M420.5 368.3V369.7M421.5 368.4V369.6M422.5 368.3V369.7M423.5 368.3V369.7M424.5 368.4V369.6M425.5 368.2V369.8M426.5 368.3V369.7M427.5 368.3V369.7M428.5 368.3V369.7M429.5 368.2V369.8M430.5 368.4V369.6M431.5 368.2V369.8M432.5 368.4V369.6M433.5 368.4V369.6" stroke="#6464dc" stroke-width="1" fill="none"/><path d="M228.5 328.8V409.2M455.4 328.8V409.2" stroke="#6e6e6e" stroke-width="1"/><path d="M555.4 328.8V409.2" stroke="#444" stroke-width="1"/><rect x="74" y="74.0" width="566" height="1" fill="#4a4a4a"/><rect x="74" y="154.1" width="566" height="0.9" fill="#e6e6e6"/><rect x="74" y="155.0" width="566" height="4.9" fill="#606060"/><rect x="74" y="156.9" width="566" height="1.5" fill="#a2a2a2"/><rect x="74" y="240.0" width="566" height="1" fill="#3a3a3a"/><rect x="74" y="243.0" width="566" height="1" fill="#4a4a4a"/><rect x="74" y="323.2" width="566" height="0.9" fill="#e6e6e6"/><rect x="74" y="324.1" width="566" height="4.7" fill="#606060"/><rect x="74" y="326.0" width="566" height="1.5" fill="#a2a2a2"/><rect x="74" y="409.0" width="566" height="1" fill="#3a3a3a"/></svg></div></body></html>
